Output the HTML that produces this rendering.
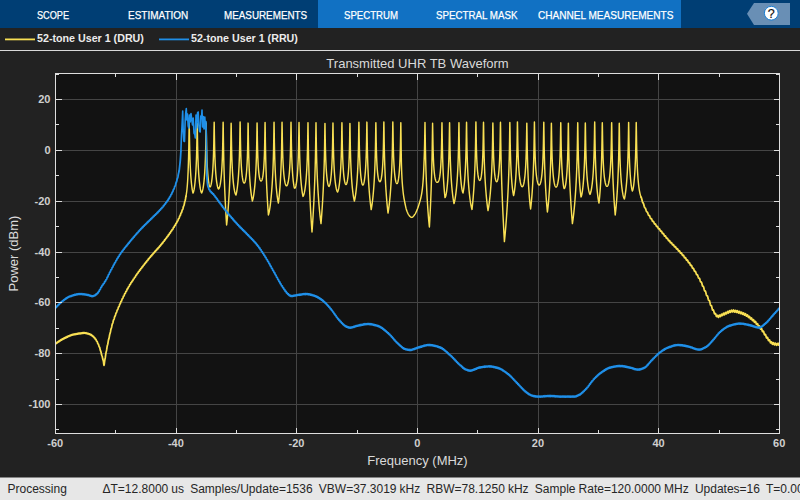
<!DOCTYPE html>
<html lang="en">
<head>
<meta charset="utf-8">
<title>Spectrum Analyzer</title>
<style>
html,body{margin:0;padding:0;}
body{width:800px;height:500px;overflow:hidden;background:#222222;position:relative;
font-family:"Liberation Sans",Arial,sans-serif;}
#root{position:absolute;left:0;top:0;width:800px;height:500px;}
.toolbar{position:absolute;left:0;top:0;width:800px;height:28px;background:#003e74;}
.active{position:absolute;left:318px;top:0;width:363px;height:28px;background:#1171c3;}
.tab{position:absolute;top:1px;height:28px;line-height:29px;color:#fff;font-size:11.2px;white-space:nowrap;-webkit-text-stroke:0.25px #fff;
transform-origin:0 50%;}
.help{position:absolute;left:747px;top:3px;width:43px;height:22px;}
.legend{position:absolute;left:0;top:28px;width:800px;height:22px;}
.legend .tx{position:absolute;top:-1px;line-height:22px;height:22px;font-size:10.7px;font-weight:bold;color:#ececec;white-space:nowrap;}
.sep{position:absolute;left:0;top:50px;width:800px;height:1px;background:#d9d9d9;}
.plot{position:absolute;left:0;top:0;}
.plot text{font-family:"Liberation Sans",Arial,sans-serif;}
.plot .tick text{font-size:11px;font-weight:bold;fill:#cfcfcf;}
.plot .lab{font-size:13px;fill:#dadada;}
.status{position:absolute;left:0;top:477px;width:800px;height:22px;border-top:1px solid #858585;background:#e7e7e7;color:#262626;
font-size:12px;line-height:23px;white-space:nowrap;overflow:hidden;word-spacing:-0.24px;}
.status span{position:absolute;top:0;}
</style>
</head>
<body>
<div id="root">
<svg class="plot" width="800" height="500" viewBox="0 0 800 500">
<rect x="55.5" y="73.5" width="724.0" height="360.0" fill="#121212"/>
<path d="M55.5 99.5H779.5M55.5 150.5H779.5M55.5 201.5H779.5M55.5 252.5H779.5M55.5 302.5H779.5M55.5 353.5H779.5M55.5 404.5H779.5M176.5 73.5V433.5M296.5 73.5V433.5M417.5 73.5V433.5M538.5 73.5V433.5M658.5 73.5V433.5" stroke="#454545" stroke-width="1" fill="none" shape-rendering="crispEdges"/>
<clipPath id="c"><rect x="56.0" y="74.0" width="723.0" height="359.0"/></clipPath>
<g clip-path="url(#c)" fill="none" stroke-linejoin="round" stroke-linecap="round">
<path d="M55.50 344.04L55.75 343.38L56.00 343.05L56.25 343.25L56.50 343.44L56.75 343.12L57.00 342.47L57.25 342.14L57.50 342.35L57.75 342.55L58.00 342.23L58.25 341.59L58.50 341.27L58.75 341.48L59.00 341.70L59.25 341.39L59.50 340.75L59.75 340.44L60.00 340.66L60.25 340.89L60.50 340.58L60.75 339.96L61.00 339.66L61.25 339.89L61.50 340.12L61.75 339.83L62.00 339.22L62.25 338.93L62.50 339.18L62.75 339.42L63.00 339.14L63.25 338.54L63.50 338.27L63.75 338.52L64.00 338.78L64.25 338.51L64.50 337.92L64.75 337.65L65.00 337.91L65.25 338.17L65.50 337.90L65.75 337.31L66.00 337.04L66.25 337.30L66.50 337.56L66.75 337.29L67.00 336.70L67.25 336.44L67.50 336.70L67.75 336.96L68.00 336.70L68.25 336.11L68.50 335.86L68.75 336.12L69.00 336.39L69.25 336.14L69.50 335.57L69.75 335.32L70.00 335.60L70.25 335.88L70.50 335.64L70.75 335.07L71.00 334.84L71.25 335.13L71.50 335.43L71.75 335.20L72.00 334.65L72.25 334.43L72.50 334.74L72.75 335.05L73.00 334.85L73.25 334.32L73.50 334.12L73.75 334.45L74.00 334.78L74.25 334.59L74.50 334.08L74.75 333.89L75.00 334.23L75.25 334.56L75.50 334.38L75.75 333.86L76.00 333.68L76.25 334.01L76.50 334.35L76.75 334.17L77.00 333.65L77.25 333.47L77.50 333.81L77.75 334.15L78.00 333.96L78.25 333.45L78.50 333.27L78.75 333.61L79.00 333.95L79.25 333.77L79.50 333.26L79.75 333.07L80.00 333.42L80.25 333.76L80.50 333.58L80.75 333.07L81.00 332.89L81.25 333.24L81.50 333.58L81.75 333.40L82.00 332.90L82.25 332.72L82.50 333.07L82.75 333.41L83.00 333.24L83.25 332.74L83.50 332.57L83.75 332.94L84.00 333.32L84.25 333.18L84.50 332.72L84.75 332.59L85.00 333.00L85.25 333.41L85.50 333.30L85.75 332.87L86.00 332.77L86.25 333.21L86.50 333.65L86.75 333.56L87.00 333.16L87.25 333.08L87.50 333.54L87.75 333.99L88.00 333.93L88.25 333.54L88.50 333.48L88.75 333.95L89.00 334.42L89.25 334.36L89.50 333.98L89.75 333.93L90.00 334.40L90.25 334.88L90.50 334.84L90.75 334.50L91.00 334.49L91.25 335.01L91.50 335.55L91.75 335.57L92.00 335.28L92.25 335.32L92.50 335.90L92.75 336.49L93.00 336.57L93.25 336.32L93.50 336.42L93.75 337.04L94.00 337.68L94.25 337.80L94.50 337.60L94.75 337.73L95.00 338.40L95.25 339.09L95.50 339.27L95.75 339.16L96.00 339.40L96.25 340.19L96.50 341.00L96.75 341.31L97.00 341.32L97.25 341.67L97.50 342.56L97.75 343.48L98.00 343.88L98.25 343.98L98.50 344.41L98.75 345.39L99.00 346.38L99.25 346.88L99.50 347.11L99.75 347.71L100.00 348.89L100.25 350.09L100.50 350.81L100.75 351.22L101.00 351.97L101.25 353.26L101.50 354.56L101.75 355.33L102.00 355.76L102.25 356.51L102.50 357.78L102.75 359.08L103.00 359.92L103.25 360.53L103.50 361.90L103.75 364.12L104.00 365.38L104.25 364.39L104.50 362.15L104.75 360.32L105.00 359.17L105.25 357.97L105.50 356.24L105.75 354.22L106.00 352.62L106.25 351.62L106.50 350.64L106.75 349.16L107.00 347.38L107.25 345.96L107.50 345.08L107.75 344.22L108.00 342.87L108.25 341.21L108.50 339.89L108.75 339.13L109.00 338.38L109.25 337.12L109.50 335.54L109.75 334.30L110.00 333.58L110.25 332.89L110.50 331.67L110.75 330.15L111.00 328.98L111.25 328.35L111.50 327.74L111.75 326.63L112.00 325.22L112.25 324.16L112.50 323.66L112.75 323.19L113.00 322.24L113.25 320.98L113.50 320.06L113.75 319.68L114.00 319.32L114.25 318.45L114.50 317.26L114.75 316.41L115.00 316.10L115.25 315.81L115.50 314.99L115.75 313.86L116.00 313.07L116.25 312.81L116.50 312.57L116.75 311.80L117.00 310.72L117.25 309.96L117.50 309.75L117.75 309.53L118.00 308.80L118.25 307.75L118.50 307.02L118.75 306.83L119.00 306.64L119.25 305.93L119.50 304.89L119.75 304.18L120.00 304.00L120.25 303.82L120.50 303.12L120.75 302.10L121.00 301.40L121.25 301.24L121.50 301.08L121.75 300.40L122.00 299.39L122.25 298.72L122.50 298.58L122.75 298.44L123.00 297.77L123.25 296.79L123.50 296.14L123.75 296.01L124.00 295.89L124.25 295.25L124.50 294.28L124.75 293.65L125.00 293.54L125.25 293.44L125.50 292.82L125.75 291.87L126.00 291.25L126.25 291.17L126.50 291.08L126.75 290.48L127.00 289.55L127.25 288.95L127.50 288.89L127.75 288.82L128.00 288.24L128.25 287.33L128.50 286.75L128.75 286.71L129.00 286.66L129.25 286.10L129.50 285.22L129.75 284.67L130.00 284.64L130.25 284.62L130.50 284.08L130.75 283.22L131.00 282.68L131.25 282.67L131.50 282.66L131.75 282.13L132.00 281.28L132.25 280.76L132.50 280.76L132.75 280.76L133.00 280.24L133.25 279.39L133.50 278.87L133.75 278.87L134.00 278.88L134.25 278.36L134.50 277.52L134.75 277.01L135.00 277.02L135.25 277.03L135.50 276.52L135.75 275.69L136.00 275.18L136.25 275.20L136.50 275.22L136.75 274.72L137.00 273.89L137.25 273.39L137.50 273.42L137.75 273.45L138.00 272.95L138.25 272.14L138.50 271.65L138.75 271.68L139.00 271.72L139.25 271.24L139.50 270.43L139.75 269.95L140.00 270.00L140.25 270.05L140.50 269.57L140.75 268.77L141.00 268.30L141.25 268.35L141.50 268.40L141.75 267.93L142.00 267.14L142.25 266.67L142.50 266.72L142.75 266.78L143.00 266.31L143.25 265.52L143.50 265.05L143.75 265.11L144.00 265.17L144.25 264.71L144.50 263.92L144.75 263.46L145.00 263.52L145.25 263.58L145.50 263.12L145.75 262.34L146.00 261.88L146.25 261.95L146.50 262.02L146.75 261.56L147.00 260.78L147.25 260.32L147.50 260.40L147.75 260.47L148.00 260.02L148.25 259.24L148.50 258.79L148.75 258.87L149.00 258.95L149.25 258.50L149.50 257.73L149.75 257.28L150.00 257.36L150.25 257.44L150.50 257.00L150.75 256.23L151.00 255.79L151.25 255.88L151.50 255.97L151.75 255.53L152.00 254.76L152.25 254.33L152.50 254.42L152.75 254.51L153.00 254.08L153.25 253.33L153.50 252.90L153.75 253.00L154.00 253.11L154.25 252.68L154.50 251.93L154.75 251.51L155.00 251.62L155.25 251.72L155.50 251.30L155.75 250.56L156.00 250.14L156.25 250.24L156.50 250.35L156.75 249.92L157.00 249.18L157.25 248.76L157.50 248.86L157.75 248.96L158.00 248.53L158.25 247.78L158.50 247.35L158.75 247.45L159.00 247.55L159.25 247.11L159.50 246.35L159.75 245.91L160.00 246.00L160.25 246.08L160.50 245.64L160.75 244.87L161.00 244.42L161.25 244.50L161.50 244.57L161.75 244.12L162.00 243.34L162.25 242.89L162.50 242.96L162.75 243.02L163.00 242.56L163.25 241.78L163.50 241.32L163.75 241.38L164.00 241.44L164.25 240.97L164.50 240.18L164.75 239.71L165.00 239.76L165.25 239.82L165.50 239.34L165.75 238.54L166.00 238.07L166.25 238.12L166.50 238.17L166.75 237.69L167.00 236.88L167.25 236.40L167.50 236.44L167.75 236.48L168.00 236.00L168.25 235.19L168.50 234.70L168.75 234.74L169.00 234.77L169.25 234.28L169.50 233.46L169.75 232.97L170.00 233.00L170.25 233.03L170.50 232.53L170.75 231.70L171.00 231.20L171.25 231.22L171.50 231.23L171.75 230.72L172.00 229.88L172.25 229.36L172.50 229.37L172.75 229.37L173.00 228.84L173.25 227.99L173.50 227.46L173.75 227.45L174.00 227.43L174.25 226.89L174.50 226.02L174.75 225.47L175.00 225.44L175.25 225.40L175.50 224.84L175.75 223.95L176.00 223.38L176.25 223.33L176.50 223.27L176.75 222.68L177.00 221.76L177.25 221.16L177.50 221.07L177.75 220.97L178.00 220.33L178.25 219.36L178.50 218.70L178.75 218.55L179.00 218.40L179.25 217.71L179.50 216.69L179.75 215.98L180.00 215.80L180.25 215.60L180.50 214.88L180.75 213.82L181.00 213.08L181.25 212.85L181.50 212.62L181.75 211.86L182.00 210.76L182.25 209.98L182.50 209.69L182.75 209.37L183.00 208.50L183.25 207.27L183.50 206.33L183.75 205.88L184.00 205.39L184.25 204.33L184.50 202.88L184.75 201.71L185.00 201.00L185.25 200.25L185.50 198.94L185.75 197.24L186.00 196.15M641.00 197.06L641.25 197.44L641.50 198.02L641.75 198.89L642.00 200.00L642.25 201.11L642.50 202.00L642.75 202.57L643.00 202.91L643.25 203.23L643.50 203.74L643.75 204.53L644.00 205.52L644.25 206.50L644.50 207.25L644.75 207.68L645.00 207.89L645.25 208.08L645.50 208.46L645.75 209.13L646.00 210.00L646.25 210.86L646.50 211.49L646.75 211.81L647.00 211.91L647.25 212.00L647.50 212.30L647.75 212.90L648.00 213.71L648.25 214.51L648.50 215.09L648.75 215.36L649.00 215.41L649.25 215.44L649.50 215.69L649.75 216.25L650.00 217.02L650.25 217.79L650.50 218.33L650.75 218.55L651.00 218.55L651.25 218.54L651.50 218.75L651.75 219.27L652.00 220.00L652.25 220.73L652.50 221.24L652.75 221.42L653.00 221.38L653.25 221.33L653.50 221.50L653.75 221.99L654.00 222.70L654.25 223.41L654.50 223.89L654.75 224.05L655.00 223.98L655.25 223.90L655.50 224.06L655.75 224.53L656.00 225.22L656.25 225.92L656.50 226.39L656.75 226.53L657.00 226.44L657.25 226.35L657.50 226.48L657.75 226.94L658.00 227.64L658.25 228.33L658.50 228.79L658.75 228.92L659.00 228.82L659.25 228.72L659.50 228.85L659.75 229.31L660.00 230.00L660.25 230.69L660.50 231.16L660.75 231.29L661.00 231.19L661.25 231.08L661.50 231.22L661.75 231.69L662.00 232.39L662.25 233.10L662.50 233.57L662.75 233.70L663.00 233.60L663.25 233.50L663.50 233.63L663.75 234.10L664.00 234.81L664.25 235.52L664.50 235.99L664.75 236.13L665.00 236.02L665.25 235.90L665.50 236.03L665.75 236.50L666.00 237.20L666.25 237.91L666.50 238.38L666.75 238.49L667.00 238.37L667.25 238.24L667.50 238.35L667.75 238.80L668.00 239.50L668.25 240.20L668.50 240.65L668.75 240.75L669.00 240.60L669.25 240.45L669.50 240.54L669.75 240.98L670.00 241.67L670.25 242.35L670.50 242.79L670.75 242.88L671.00 242.71L671.25 242.55L671.50 242.63L671.75 243.06L672.00 243.74L672.25 244.43L672.50 244.86L672.75 244.94L673.00 244.76L673.25 244.59L673.50 244.66L673.75 245.09L674.00 245.78L674.25 246.46L674.50 246.89L674.75 246.97L675.00 246.79L675.25 246.60L675.50 246.68L675.75 247.11L676.00 247.80L676.25 248.49L676.50 248.93L676.75 249.01L677.00 248.82L677.25 248.64L677.50 248.72L677.75 249.16L678.00 249.86L678.25 250.57L678.50 251.01L678.75 251.10L679.00 250.92L679.25 250.74L679.50 250.83L679.75 251.28L680.00 252.00L680.25 252.72L680.50 253.18L680.75 253.27L681.00 253.10L681.25 252.93L681.50 253.02L681.75 253.48L682.00 254.22L682.25 254.95L682.50 255.42L682.75 255.52L683.00 255.35L683.25 255.18L683.50 255.28L683.75 255.75L684.00 256.50L684.25 257.25L684.50 257.73L684.75 257.84L685.00 257.68L685.25 257.51L685.50 257.62L685.75 258.11L686.00 258.88L686.25 259.64L686.50 260.14L686.75 260.26L687.00 260.11L687.25 259.96L687.50 260.08L687.75 260.59L688.00 261.37L688.25 262.16L688.50 262.67L688.75 262.81L689.00 262.67L689.25 262.53L689.50 262.66L689.75 263.19L690.00 264.00L690.25 264.81L690.50 265.35L690.75 265.50L691.00 265.38L691.25 265.25L691.50 265.41L691.75 265.96L692.00 266.80L692.25 267.64L692.50 268.20L692.75 268.38L693.00 268.27L693.25 268.17L693.50 268.35L693.75 268.92L694.00 269.79L694.25 270.66L694.50 271.25L694.75 271.44L695.00 271.36L695.25 271.28L695.50 271.48L695.75 272.08L696.00 272.98L696.25 273.88L696.50 274.50L696.75 274.72L697.00 274.65L697.25 274.59L697.50 274.82L697.75 275.45L698.00 276.38L698.25 277.31L698.50 277.96L698.75 278.20L699.00 278.16L699.25 278.12L699.50 278.38L699.75 279.04L700.00 280.00L700.25 280.97L700.50 281.66L700.75 281.95L701.00 281.95L701.25 281.96L701.50 282.26L701.75 283.00L702.00 284.05L702.25 285.12L702.50 285.89L702.75 286.23L703.00 286.27L703.25 286.31L703.50 286.66L703.75 287.46L704.00 288.58L704.25 289.70L704.50 290.52L704.75 290.89L705.00 290.93L705.25 290.97L705.50 291.33L705.75 292.16L706.00 293.31L706.25 294.47L706.50 295.30L706.75 295.66L707.00 295.68L707.25 295.69L707.50 296.03L707.75 296.84L708.00 298.00L708.25 299.17L708.50 300.01L708.75 300.37L709.00 300.39L709.25 300.41L709.50 300.79L709.75 301.67L710.00 302.90L710.25 304.15L710.50 305.04L710.75 305.42L711.00 305.43L711.25 305.43L711.50 305.79L711.75 306.65L712.00 307.86L712.25 309.07L712.50 309.90L712.75 310.19L713.00 310.09L713.25 309.96L713.50 310.18L713.75 310.91L714.00 312.00L714.25 313.08L714.50 313.79L714.75 313.95L715.00 313.71L715.25 313.45L715.50 313.55L715.75 314.16L716.00 315.13L716.25 316.07L716.50 316.55L716.75 316.45L717.00 315.95L717.25 315.43L717.50 315.29L717.75 315.67L718.00 316.40L718.25 317.09L718.50 317.34L718.75 316.99L719.00 316.23L719.25 315.45L719.50 315.06L719.75 315.23L720.00 315.80L720.25 316.38L720.50 316.56L720.75 316.17L721.00 315.39L721.25 314.60L721.50 314.20L721.75 314.36L722.00 314.91L722.25 315.46L722.50 315.61L722.75 315.21L723.00 314.42L723.25 313.64L723.50 313.25L723.75 313.42L724.00 314.00L724.25 314.58L724.50 314.76L724.75 314.38L725.00 313.60L725.25 312.82L725.50 312.44L725.75 312.61L726.00 313.17L726.25 313.73L726.50 313.89L726.75 313.50L727.00 312.72L727.25 311.93L727.50 311.54L727.75 311.71L728.00 312.27L728.25 312.84L728.50 313.01L728.75 312.63L729.00 311.86L729.25 311.09L729.50 310.72L729.75 310.91L730.00 311.50L730.25 312.09L730.50 312.29L730.75 311.94L731.00 311.21L731.25 310.48L731.50 310.15L731.75 310.38L732.00 311.01L732.25 311.66L732.50 311.91L732.75 311.62L733.00 310.94L733.25 310.27L733.50 310.00L733.75 310.30L734.00 311.00L734.25 311.71L734.50 312.03L734.75 311.79L735.00 311.16L735.25 310.54L735.50 310.31L735.75 310.64L736.00 311.37L736.25 312.10L736.50 312.43L736.75 312.22L737.00 311.61L737.25 311.00L737.50 310.79L737.75 311.14L738.00 311.89L738.25 312.63L738.50 312.99L738.75 312.78L739.00 312.19L739.25 311.60L739.50 311.40L739.75 311.77L740.00 312.52L740.25 313.28L740.50 313.64L740.75 313.45L741.00 312.87L741.25 312.29L741.50 312.10L741.75 312.47L742.00 313.24L742.25 314.00L742.50 314.38L742.75 314.19L743.00 313.62L743.25 313.04L743.50 312.86L743.75 313.23L744.00 314.00L744.25 314.77L744.50 315.15L744.75 314.99L745.00 314.43L745.25 313.88L745.50 313.73L745.75 314.14L746.00 314.95L746.25 315.76L746.50 316.18L746.75 316.06L747.00 315.54L747.25 315.02L747.50 314.91L747.75 315.35L748.00 316.19L748.25 317.04L748.50 317.49L748.75 317.40L749.00 316.91L749.25 316.42L749.50 316.33L749.75 316.80L750.00 317.67L750.25 318.54L750.50 319.01L750.75 318.94L751.00 318.47L751.25 318.00L751.50 317.93L751.75 318.41L752.00 319.29L752.25 320.18L752.50 320.67L752.75 320.60L753.00 320.14L753.25 319.68L753.50 319.62L753.75 320.11L754.00 321.00L754.25 321.89L754.50 322.39L754.75 322.34L755.00 321.90L755.25 321.47L755.50 321.44L755.75 321.96L756.00 322.89L756.25 323.82L756.50 324.36L756.75 324.35L757.00 323.95L757.25 323.55L757.50 323.55L757.75 324.11L758.00 325.07L758.25 326.03L758.50 326.60L758.75 326.62L759.00 326.24L759.25 325.87L759.50 325.90L759.75 326.48L760.00 327.46L760.25 328.45L760.50 329.04L760.75 329.07L761.00 328.72L761.25 328.37L761.50 328.41L761.75 329.01L762.00 330.00L762.25 331.00L762.50 331.63L762.75 331.71L763.00 331.41L763.25 331.12L763.50 331.23L763.75 331.90L764.00 332.98L764.25 334.06L764.50 334.75L764.75 334.88L765.00 334.62L765.25 334.36L765.50 334.49L765.75 335.17L766.00 336.24L766.25 337.30L766.50 337.96L766.75 338.05L767.00 337.73L767.25 337.40L767.50 337.45L767.75 338.04L768.00 339.00L768.25 339.96L768.50 340.52L768.75 340.54L769.00 340.16L769.25 339.77L769.50 339.79L769.75 340.35L770.00 341.30L770.25 342.24L770.50 342.78L770.75 342.76L771.00 342.32L771.25 341.88L771.50 341.81L771.75 342.28L772.00 343.13L772.25 343.95L772.50 344.36L772.75 344.19L773.00 343.60L773.25 343.00L773.50 342.78L773.75 343.13L774.00 343.86L774.25 344.59L774.50 344.93L774.75 344.71L775.00 344.09L775.25 343.47L775.50 343.23L775.75 343.56L776.00 344.27L776.25 344.98L776.50 345.29L776.75 345.04L777.00 344.40L777.25 343.74L777.50 343.44L777.75 343.67L778.00 344.28L778.25 344.87L778.50 345.04L778.75 344.65L779.00 343.86L779.25 343.06L779.50 342.65" stroke="#f9e054" stroke-width="1.75"/>
<path d="M186.00 196.15L186.20 195.00L186.40 193.73L186.60 192.33L186.80 190.76L187.00 189.00L187.20 186.92L187.40 184.42L187.60 181.45L187.80 177.97L188.00 173.90L188.20 169.10L188.40 163.33L188.60 156.21L188.80 146.95L189.00 134.21L189.20 122.49L189.40 133.18L189.60 144.98L189.80 153.36L190.00 159.69L190.20 164.73L190.40 168.92L190.60 172.49L190.80 175.59L191.00 178.31L191.20 180.72L191.40 182.86L191.60 184.77L191.80 186.47L192.00 187.97L192.20 189.30L192.40 190.46L192.60 191.46L192.80 192.31L193.00 193.00L193.20 192.68L193.40 192.21L193.60 191.59L193.80 190.81L194.00 189.89L194.20 188.81L194.40 187.56L194.60 186.14L194.80 184.53L195.00 182.71L195.20 180.66L195.40 178.35L195.60 175.73L195.80 172.72L196.00 169.25L196.20 165.14L196.40 160.18L196.60 153.93L196.80 145.61L197.00 133.87L197.20 123.22L197.40 133.79L197.60 145.45L197.80 153.68L198.00 159.84L198.20 164.71L198.40 168.73L198.60 172.12L198.80 175.04L199.00 177.59L199.20 179.84L199.40 181.83L199.60 183.61L199.80 185.19L200.00 186.60L200.20 187.85L200.40 188.96L200.60 189.93L200.80 190.78L201.00 191.51L201.20 192.12L201.40 192.61L201.60 193.00L201.80 192.69L202.00 192.27L202.20 191.74L202.40 191.10L202.60 190.34L202.80 189.46L203.00 188.46L203.20 187.32L203.40 186.05L203.60 184.61L203.80 183.01L204.00 181.21L204.20 179.19L204.40 176.91L204.60 174.33L204.80 171.35L205.00 167.90L205.20 163.79L205.40 158.77L205.60 152.38L205.80 143.75L206.00 131.52L206.17 123.04L206.20 123.43L206.40 135.50L206.60 146.45L206.80 154.16L207.00 159.95L207.20 164.52L207.40 168.26L207.60 171.40L207.80 174.08L208.00 176.38L208.20 178.37L208.40 180.09L208.60 181.58L208.80 182.87L209.00 183.96L209.20 184.88L209.40 185.64L209.60 186.24L209.80 186.69L210.00 187.00L210.20 186.87L210.40 186.60L210.60 186.19L210.80 185.63L211.00 184.92L211.20 184.06L211.40 183.03L211.60 181.84L211.80 180.45L212.00 178.85L212.20 177.02L212.40 174.92L212.60 172.49L212.80 169.68L213.00 166.36L213.20 162.39L213.40 157.50L213.60 151.24L213.80 142.72L214.00 130.60L214.17 122.20L214.20 122.59L214.40 134.67L214.60 145.62L214.80 153.35L215.00 159.15L215.20 163.75L215.40 167.53L215.60 170.72L215.80 173.45L216.00 175.82L216.20 177.90L216.40 179.72L216.60 181.33L216.80 182.76L217.00 184.01L217.20 185.11L217.40 186.07L217.60 186.89L217.80 187.60L218.00 188.18L218.20 188.64L218.40 189.00L218.60 188.95L218.80 188.79L219.00 188.52L219.20 188.13L219.40 187.64L219.60 187.03L219.80 186.29L220.00 185.43L220.20 184.43L220.40 183.29L220.60 181.99L220.80 180.51L221.00 178.83L221.20 176.92L221.40 174.74L221.60 172.24L221.80 169.34L222.00 165.93L222.20 161.84L222.40 156.78L222.60 150.24L222.80 141.28L223.00 128.64L223.14 122.31L223.20 124.24L223.40 138.94L223.60 151.28L223.80 160.70L224.00 168.41L224.20 175.02L224.40 180.90L224.60 186.23L224.80 191.15L225.00 195.73L225.20 200.05L225.40 204.13L225.60 208.01L225.80 211.71L226.00 215.25L226.20 218.64L226.40 221.89L226.60 225.00L226.80 223.35L227.00 221.57L227.20 219.65L227.40 217.61L227.60 215.43L227.80 213.12L228.00 210.67L228.20 208.07L228.40 205.32L228.60 202.41L228.80 199.31L229.00 196.01L229.20 192.49L229.40 188.70L229.60 184.59L229.80 180.09L230.00 175.09L230.20 169.43L230.40 162.83L230.60 154.79L230.80 144.36L231.00 130.35L231.14 123.18L231.20 124.71L231.40 137.78L231.60 148.34L231.80 155.90L232.00 161.68L232.20 166.32L232.40 170.19L232.60 173.49L232.80 176.35L233.00 178.86L233.20 181.08L233.40 183.06L233.60 184.83L233.80 186.41L234.00 187.83L234.20 189.09L234.40 190.22L234.60 191.21L234.80 192.09L235.00 192.85L235.20 193.49L235.40 194.03L235.60 194.46L235.80 194.78L236.00 195.00L236.20 194.21L236.40 193.30L236.60 192.29L236.80 191.15L237.00 189.90L237.20 188.51L237.40 186.97L237.60 185.28L237.80 183.42L238.00 181.35L238.20 179.06L238.40 176.50L238.60 173.61L238.80 170.31L239.00 166.49L239.20 161.96L239.40 156.42L239.60 149.30L239.80 139.56L240.00 126.30L240.11 121.86L240.20 124.89L240.40 137.87L240.60 147.55L240.80 154.42L241.00 159.62L241.20 163.74L241.40 167.10L241.60 169.90L241.80 172.26L242.00 174.28L242.20 176.00L242.40 177.47L242.60 178.73L242.80 179.80L243.00 180.70L243.20 181.44L243.40 182.03L243.60 182.48L243.80 182.81L244.00 183.00L244.20 183.07L244.40 183.00L244.60 182.80L244.80 182.47L245.00 182.00L245.20 181.37L245.40 180.58L245.60 179.62L245.80 178.46L246.00 177.08L246.20 175.44L246.40 173.52L246.60 171.24L246.80 168.53L247.00 165.26L247.20 161.26L247.40 156.21L247.60 149.56L247.80 140.25L248.00 127.37L248.11 123.10L248.20 126.34L248.40 139.88L248.60 150.15L248.80 157.66L249.00 163.53L249.20 168.34L249.40 172.41L249.60 175.95L249.80 179.07L250.00 181.85L250.20 184.36L250.40 186.64L250.60 188.71L250.80 190.61L251.00 192.35L251.20 193.95L251.40 195.41L251.60 196.76L251.80 197.98L252.00 199.09L252.20 200.10L252.40 201.00L252.60 200.37L252.80 199.63L253.00 198.79L253.20 197.85L253.40 196.79L253.60 195.63L253.80 194.35L254.00 192.94L254.20 191.40L254.40 189.71L254.60 187.87L254.80 185.85L255.00 183.62L255.20 181.16L255.40 178.42L255.60 175.34L255.80 171.84L256.00 167.79L256.20 163.00L256.40 157.12L256.60 149.56L256.80 139.16L257.00 125.69L257.08 123.07L257.20 127.98L257.40 140.73L257.60 149.81L257.80 156.27L258.00 161.15L258.20 164.97L258.40 168.06L258.60 170.58L258.80 172.67L259.00 174.40L259.20 175.85L259.40 177.05L259.60 178.05L259.80 178.86L260.00 179.52L260.20 180.05L260.40 180.45L260.60 180.73L260.80 180.92L261.00 181.00L261.20 180.98L261.40 180.87L261.60 180.64L261.80 180.31L262.00 179.86L262.20 179.28L262.40 178.56L262.60 177.67L262.80 176.60L263.00 175.32L263.20 173.78L263.40 171.95L263.60 169.75L263.80 167.09L264.00 163.85L264.20 159.82L264.40 154.66L264.60 147.76L264.80 137.97L265.00 125.02L265.08 122.57L265.20 128.28L265.40 142.63L265.60 153.47L265.80 161.80L266.00 168.62L266.20 174.48L266.40 179.66L266.60 184.34L266.80 188.64L267.00 192.62L267.20 196.35L267.40 199.86L267.60 203.19L267.80 206.35L268.00 209.37L268.20 212.24L268.40 215.00L268.60 214.39L268.80 213.67L269.00 212.84L269.20 211.90L269.40 210.85L269.60 209.70L269.80 208.45L270.00 207.09L270.20 205.63L270.40 204.07L270.60 202.39L270.80 200.60L271.00 198.68L271.20 196.63L271.40 194.44L271.60 192.09L271.80 189.56L272.00 186.83L272.20 183.87L272.40 180.62L272.60 177.03L272.80 173.01L273.00 168.43L273.20 163.07L273.40 156.57L273.60 148.27L273.80 136.93L274.00 123.51L274.05 122.31L274.20 129.74L274.40 142.84L274.60 152.32L274.80 159.44L275.00 165.14L275.20 169.89L275.40 173.98L275.60 177.57L275.80 180.76L276.00 183.63L276.20 186.22L276.40 188.58L276.60 190.74L276.80 192.71L277.00 194.51L277.20 196.15L277.40 197.64L277.60 198.99L277.80 200.20L278.00 201.27L278.20 202.20L278.40 203.00L278.60 201.51L278.80 199.89L279.00 198.12L279.20 196.20L279.40 194.11L279.60 191.85L279.80 189.39L280.00 186.72L280.20 183.80L280.40 180.59L280.60 177.02L280.80 173.02L281.00 168.44L281.20 163.08L281.40 156.57L281.60 148.26L281.80 136.90L282.00 123.48L282.05 122.28L282.20 129.23L282.40 141.60L282.60 150.29L282.80 156.61L283.00 161.49L283.20 165.41L283.40 168.66L283.60 171.40L283.80 173.74L284.00 175.76L284.20 177.52L284.40 179.04L284.60 180.37L284.80 181.52L285.00 182.50L285.20 183.35L285.40 184.06L285.60 184.64L285.80 185.10L286.00 185.45L286.20 185.68L286.40 185.81L286.60 185.83L286.80 185.74L287.00 185.54L287.20 185.23L287.40 184.80L287.60 184.26L287.80 183.60L288.00 182.80L288.20 181.86L288.40 180.77L288.60 179.51L288.80 178.05L289.00 176.38L289.20 174.46L289.40 172.23L289.60 169.64L289.80 166.58L290.00 162.92L290.20 158.42L290.40 152.68L290.60 144.96L290.80 133.94L291.00 122.41L291.02 122.24L291.20 131.44L291.40 143.51L291.60 152.01L291.80 158.33L292.00 163.30L292.20 167.37L292.40 170.80L292.60 173.73L292.80 176.28L293.00 178.50L293.20 180.45L293.40 182.17L293.60 183.69L293.80 185.01L294.00 186.17L294.20 187.16L294.40 188.00L294.60 188.15L294.80 188.16L295.00 188.04L295.20 187.77L295.40 187.36L295.60 186.81L295.80 186.11L296.00 185.26L296.20 184.25L296.40 183.07L296.60 181.71L296.80 180.14L297.00 178.33L297.20 176.27L297.40 173.89L297.60 171.14L297.80 167.91L298.00 164.08L298.20 159.40L298.40 153.48L298.60 145.59L298.80 134.39L299.00 122.71L299.02 122.53L299.20 131.90L299.40 144.17L299.60 152.90L299.80 159.45L300.00 164.66L300.20 168.98L300.40 172.67L300.60 175.88L300.80 178.70L301.00 181.23L301.20 183.50L301.40 185.54L301.60 187.40L301.80 189.09L302.00 190.63L302.20 192.03L302.40 193.30L302.60 194.45L302.80 195.48L303.00 196.40L303.20 196.15L303.40 195.80L303.60 195.34L303.80 194.78L304.00 194.11L304.20 193.33L304.40 192.44L304.60 191.43L304.80 190.31L305.00 189.05L305.20 187.65L305.40 186.10L305.60 184.38L305.80 182.46L306.00 180.33L306.20 177.95L306.40 175.26L306.60 172.19L306.80 168.65L307.00 164.48L307.20 159.43L307.40 153.07L307.60 144.58L307.80 132.61L307.99 122.62L308.00 122.73L308.20 135.52L308.40 148.77L308.60 158.75L308.80 166.76L309.00 173.56L309.20 179.54L309.40 184.94L309.60 189.89L309.80 194.50L310.00 198.81L310.20 202.88L310.40 206.74L310.60 210.42L310.80 213.93L311.00 217.28L311.20 220.49L311.40 223.56L311.60 226.50L311.80 229.32L312.00 232.00L312.20 229.30L312.40 226.47L312.60 223.51L312.80 220.42L313.00 217.19L313.20 213.81L313.40 210.28L313.60 206.58L313.80 202.69L314.00 198.58L314.20 194.23L314.40 189.58L314.60 184.58L314.80 179.12L315.00 173.05L315.20 166.14L315.40 157.96L315.60 147.72L315.80 134.07L315.99 122.70L316.00 122.78L316.20 134.88L316.40 147.34L316.60 156.50L316.80 163.66L317.00 169.60L317.20 174.71L317.40 179.23L317.60 183.31L317.80 187.03L318.00 190.46L318.20 193.66L318.40 196.65L318.60 199.46L318.80 202.12L319.00 204.63L319.20 207.02L319.40 209.28L319.60 211.43L319.80 213.47L320.00 215.41L320.20 217.25L320.40 218.99L320.60 220.62L320.80 222.16L321.00 223.60L321.20 221.21L321.40 218.72L321.60 216.12L321.80 213.41L322.00 210.57L322.20 207.60L322.40 204.49L322.60 201.22L322.80 197.76L323.00 194.10L323.20 190.19L323.40 185.97L323.60 181.39L323.80 176.34L324.00 170.64L324.20 164.05L324.40 156.09L324.60 145.88L324.80 132.11L324.96 123.37L325.00 124.05L325.20 136.43L325.40 147.13L325.60 154.67L325.80 160.32L326.00 164.78L326.20 168.43L326.40 171.47L326.60 174.06L326.80 176.27L327.00 178.18L327.20 179.83L327.40 181.24L327.60 182.46L327.80 183.49L328.00 184.35L328.20 185.05L328.40 185.60L328.60 186.01L328.80 186.27L329.00 186.40L329.20 186.19L329.40 185.84L329.60 185.35L329.80 184.72L330.00 183.93L330.20 182.98L330.40 181.85L330.60 180.53L330.80 179.01L331.00 177.24L331.20 175.20L331.40 172.83L331.60 170.06L331.80 166.78L332.00 162.83L332.20 157.94L332.40 151.64L332.60 143.02L332.80 130.75L332.96 123.06L333.00 123.76L333.20 136.26L333.40 147.09L333.60 154.77L333.80 160.58L334.00 165.20L334.20 169.02L334.40 172.25L334.60 175.03L334.80 177.45L335.00 179.58L335.20 181.47L335.40 183.13L335.60 184.62L335.80 185.93L336.00 187.10L336.20 188.12L336.40 189.02L336.60 189.79L336.80 190.45L337.00 191.00L337.20 191.44L337.40 191.77L337.60 192.00L337.80 191.57L338.00 191.03L338.20 190.38L338.40 189.62L338.60 188.74L338.80 187.74L339.00 186.60L339.20 185.32L339.40 183.88L339.60 182.27L339.80 180.45L340.00 178.41L340.20 176.09L340.40 173.46L340.60 170.42L340.80 166.86L341.00 162.61L341.20 157.37L341.40 150.63L341.60 141.39L341.80 128.51L341.93 122.80L342.00 124.73L342.20 137.64L342.40 147.70L342.60 154.81L342.80 160.18L343.00 164.43L343.20 167.90L343.40 170.80L343.60 173.26L343.80 175.36L344.00 177.16L344.20 178.71L344.40 180.03L344.60 181.15L344.80 182.09L345.00 182.87L345.20 183.49L345.40 183.95L345.60 184.28L345.80 184.46L346.00 184.50L346.20 184.40L346.40 184.17L346.60 183.79L346.80 183.26L347.00 182.57L347.20 181.72L347.40 180.69L347.60 179.46L347.80 178.02L348.00 176.33L348.20 174.36L348.40 172.04L348.60 169.31L348.80 166.05L349.00 162.07L349.20 157.11L349.40 150.62L349.60 141.62L349.80 128.95L349.93 123.36L350.00 125.44L350.20 138.87L350.40 149.49L350.60 157.19L350.80 163.16L351.00 168.03L351.20 172.14L351.40 175.69L351.60 178.81L351.80 181.58L352.00 184.07L352.20 186.33L352.40 188.38L352.60 190.24L352.80 191.94L353.00 193.50L353.20 194.92L353.40 196.22L353.60 197.39L353.80 198.46L354.00 199.41L354.20 200.26L354.40 201.00L354.60 200.19L354.80 199.28L355.00 198.26L355.20 197.14L355.40 195.90L355.60 194.55L355.80 193.08L356.00 191.48L356.20 189.73L356.40 187.83L356.60 185.76L356.80 183.49L357.00 180.98L357.20 178.21L357.40 175.11L357.60 171.60L357.80 167.56L358.00 162.81L358.20 157.01L358.40 149.62L358.60 139.53L358.80 126.04L358.90 122.18L359.00 125.84L359.20 138.87L359.40 148.45L359.60 155.32L359.80 160.56L360.00 164.75L360.20 168.20L360.40 171.11L360.60 173.58L360.80 175.71L361.00 177.55L361.20 179.13L361.40 180.50L361.60 181.66L361.80 182.65L362.00 183.47L362.20 184.13L362.40 184.64L362.60 185.00L362.80 185.07L363.00 184.99L363.20 184.78L363.40 184.42L363.60 183.91L363.80 183.26L364.00 182.44L364.20 181.46L364.40 180.30L364.60 178.94L364.80 177.37L365.00 175.54L365.20 173.42L365.40 170.95L365.60 168.06L365.80 164.61L366.00 160.43L366.20 155.20L366.40 148.34L366.60 138.77L366.80 125.75L366.90 122.10L367.00 126.11L367.20 139.96L367.40 150.44L367.60 158.24L367.80 164.45L368.00 169.63L368.20 174.10L368.40 178.05L368.60 181.59L368.80 184.81L369.00 187.76L369.20 190.49L369.40 193.02L369.60 195.39L369.80 197.59L370.00 199.66L370.20 201.60L370.40 203.42L370.60 205.13L370.80 206.72L371.00 208.21L371.20 209.60L371.40 208.56L371.60 207.41L371.80 206.16L372.00 204.81L372.20 203.35L372.40 201.77L372.60 200.09L372.80 198.27L373.00 196.33L373.20 194.24L373.40 191.99L373.60 189.56L373.80 186.94L374.00 184.07L374.20 180.93L374.40 177.46L374.60 173.55L374.80 169.10L375.00 163.89L375.20 157.59L375.40 149.57L375.60 138.65L375.80 124.95L375.87 122.79L376.00 128.37L376.20 141.00L376.40 149.94L376.60 156.33L376.80 161.19L377.00 165.02L377.20 168.12L377.40 170.69L377.60 172.82L377.80 174.61L378.00 176.12L378.20 177.38L378.40 178.44L378.60 179.32L378.80 180.04L379.00 180.62L379.20 181.06L379.40 181.39L379.60 181.60L379.80 181.70L380.00 181.68L380.20 181.54L380.40 181.28L380.60 180.90L380.80 180.38L381.00 179.72L381.20 178.90L381.40 177.91L381.60 176.73L381.80 175.33L382.00 173.68L382.20 171.72L382.40 169.39L382.60 166.62L382.80 163.25L383.00 159.10L383.20 153.81L383.40 146.76L383.60 136.74L383.80 123.85L383.87 121.92L384.00 128.12L384.20 141.89L384.40 152.07L384.60 159.79L384.80 166.03L385.00 171.32L385.20 175.93L385.40 180.05L385.60 183.77L385.80 187.19L386.00 190.34L386.20 193.28L386.40 196.03L386.60 198.61L386.80 201.04L387.00 203.33L387.20 205.49L387.40 207.54L387.60 209.47L387.80 211.29L388.00 213.00L388.20 211.90L388.40 210.70L388.60 209.39L388.80 207.98L389.00 206.46L389.20 204.83L389.40 203.08L389.60 201.22L389.80 199.23L390.00 197.10L390.20 194.83L390.40 192.40L390.60 189.79L390.80 186.97L391.00 183.92L391.20 180.58L391.40 176.89L391.60 172.77L391.80 168.08L392.00 162.61L392.20 155.97L392.40 147.49L392.60 135.90L392.80 122.72L392.84 121.91L393.00 129.55L393.20 141.73L393.40 150.27L393.60 156.48L393.80 161.27L394.00 165.13L394.20 168.31L394.40 170.98L394.60 173.25L394.80 175.20L395.00 176.87L395.20 178.31L395.40 179.54L395.60 180.59L395.80 181.46L396.00 182.18L396.20 182.74L396.40 183.17L396.60 183.45L396.80 183.60L397.00 183.61L397.20 183.48L397.40 183.21L397.60 182.79L397.80 182.22L398.00 181.49L398.20 180.58L398.40 179.48L398.60 178.17L398.80 176.63L399.00 174.83L399.20 172.71L399.40 170.21L399.60 167.25L399.80 163.68L400.00 159.30L400.20 153.72L400.40 146.26L400.60 135.63L400.80 123.31L400.84 122.64L401.00 134.06L401.20 150.65L401.40 162.46L401.60 170.00L401.80 174.83L402.00 178.67L402.20 181.83L402.40 184.51L402.60 186.86L402.80 189.00L403.00 190.95L403.20 192.71L403.40 194.31L403.60 195.76L403.80 197.09L404.00 198.32L404.20 199.45L404.40 200.50L404.60 201.49L404.80 202.49L405.00 203.49L405.20 204.49L405.40 205.47L405.60 206.42L405.80 207.32L406.00 208.16L406.20 208.93L406.40 209.60L406.60 210.20L406.80 210.77L407.00 211.31L407.20 211.81L407.40 212.29L407.60 212.73L407.80 213.15L408.00 213.55L408.20 213.92L408.40 214.27L408.60 214.59L408.80 214.90L409.00 215.19L409.20 215.46L409.40 215.72L409.60 215.96L409.80 216.19L410.00 216.40L410.20 216.59L410.40 216.77L410.60 216.93L410.80 217.07L411.00 217.19L411.20 217.30L411.40 217.37L411.60 217.41L411.80 217.40L412.00 217.36L412.20 217.29L412.40 217.19L412.60 217.05L412.80 216.89L413.00 216.71L413.20 216.51L413.40 216.28L413.60 216.05L413.80 215.79L414.00 215.53L414.20 215.25L414.40 214.97L414.60 214.69L414.80 214.40L415.00 214.10L415.20 213.78L415.40 213.43L415.60 213.07L415.80 212.69L416.00 212.29L416.20 211.87L416.40 211.44L416.60 211.00L416.80 210.54L417.00 210.08L417.20 209.60L417.40 209.10L417.60 208.58L417.80 208.02L418.00 207.45L418.20 206.85L418.40 206.24L418.60 205.62L418.80 204.99L419.00 204.34L419.20 203.70L419.40 203.05L419.60 202.40L419.80 201.74L420.00 201.07L420.20 200.37L420.40 199.63L420.60 198.86L420.80 198.04L421.00 197.16L421.20 196.22L421.40 195.20L421.60 194.10L421.80 192.91L422.00 191.60L422.20 190.14L422.40 188.48L422.60 186.62L422.80 184.53L423.00 182.20L423.20 179.60L423.40 176.38L423.60 172.41L423.80 167.92L424.00 163.08L424.20 158.00L424.40 152.06L424.60 144.08L424.80 132.74L425.00 122.57L425.20 134.40L425.40 147.51L425.60 157.26L425.80 165.00L426.00 171.49L426.20 177.15L426.40 182.20L426.60 186.80L426.80 191.03L427.00 194.96L427.20 198.63L427.40 202.07L427.60 205.31L427.80 208.37L428.00 211.25L428.20 213.97L428.40 216.52L428.60 218.92L428.80 221.17L429.00 223.27L429.20 225.21L429.40 227.00L429.60 223.44L429.80 219.71L430.00 215.82L430.20 211.76L430.40 207.50L430.60 203.02L430.80 198.29L431.00 193.27L431.20 187.90L431.40 182.08L431.60 175.66L431.80 168.42L432.00 159.96L432.20 149.49L432.40 135.69L432.60 123.25L432.80 133.60L433.00 144.95L433.20 152.82L433.40 158.56L433.60 162.97L433.80 166.48L434.00 169.33L434.20 171.68L434.40 173.63L434.60 175.27L434.80 176.64L435.00 177.79L435.20 178.76L435.40 179.56L435.60 180.23L435.80 180.78L436.00 181.23L436.20 181.59L436.40 181.88L436.60 182.10L436.80 182.25L437.00 182.35L437.20 182.40L437.40 182.39L437.60 182.33L437.80 182.22L438.00 182.04L438.20 181.80L438.40 181.48L438.60 181.08L438.80 180.59L439.00 180.00L439.20 179.28L439.40 178.43L439.60 177.41L439.80 176.19L440.00 174.76L440.20 173.05L440.40 171.01L440.60 168.57L440.80 165.61L441.00 161.97L441.20 157.38L441.40 151.37L441.60 143.08L441.80 131.12L441.97 122.81L442.00 123.29L442.20 136.06L442.40 147.78L442.60 156.30L442.80 162.92L443.00 168.34L443.20 172.95L443.40 176.96L443.60 180.52L443.80 183.70L444.00 186.59L444.20 189.21L444.40 191.60L444.60 193.78L444.80 195.78L445.00 197.60L445.20 197.39L445.40 197.02L445.60 196.50L445.80 195.81L446.00 194.97L446.20 193.98L446.40 192.83L446.60 191.52L446.80 190.03L447.00 188.37L447.20 186.50L447.40 184.43L447.60 182.12L447.80 179.53L448.00 176.61L448.20 173.30L448.40 169.50L448.60 165.04L448.80 159.66L449.00 152.92L449.20 143.94L449.40 131.38L449.57 122.64L449.60 123.09L449.80 135.63L450.00 147.10L450.20 155.36L450.40 161.72L450.60 166.89L450.80 171.25L451.00 175.02L451.20 178.35L451.40 181.33L451.60 184.02L451.80 186.47L452.00 188.72L452.20 190.78L452.40 192.69L452.60 194.46L452.80 196.09L453.00 197.61L453.20 199.01L453.40 200.31L453.60 201.50L453.80 202.60L454.00 203.60L454.20 202.93L454.40 202.16L454.60 201.30L454.80 200.34L455.00 199.29L455.20 198.13L455.40 196.88L455.60 195.51L455.80 194.03L456.00 192.43L456.20 190.69L456.40 188.80L456.60 186.74L456.80 184.49L457.00 182.03L457.20 179.30L457.40 176.26L457.60 172.84L457.80 168.91L458.00 164.30L458.20 158.74L458.40 151.72L458.60 142.29L458.80 129.21L458.94 122.61L459.00 124.16L459.20 137.33L459.40 148.00L459.60 155.68L459.80 161.57L460.00 166.32L460.20 170.29L460.40 173.68L460.60 176.62L460.80 179.20L461.00 181.47L461.20 183.48L461.40 185.26L461.60 186.83L461.80 188.21L462.00 189.42L462.20 190.45L462.40 191.32L462.60 192.04L462.80 192.60L463.00 193.00L463.20 192.07L463.40 190.98L463.60 189.72L463.80 188.29L464.00 186.69L464.20 184.88L464.40 182.85L464.60 180.59L464.80 178.03L465.00 175.15L465.20 171.86L465.40 168.05L465.60 163.55L465.80 158.09L466.00 151.15L466.20 141.79L466.40 128.79L466.54 122.23L466.60 123.85L466.80 137.30L467.00 148.27L467.20 156.27L467.40 162.50L467.60 167.62L467.80 171.97L468.00 175.76L468.20 179.13L468.40 182.15L468.60 184.90L468.80 187.41L469.00 189.73L469.20 191.86L469.40 193.85L469.60 195.69L469.80 197.40L470.00 199.00L470.20 200.48L470.40 201.86L470.60 203.13L470.80 204.31L471.00 205.39L471.20 206.38L471.40 207.28L471.60 208.08L471.80 208.79L472.00 209.40L472.20 207.61L472.40 205.72L472.60 203.73L472.80 201.62L473.00 199.39L473.20 197.03L473.40 194.51L473.60 191.84L473.80 188.97L474.00 185.89L474.20 182.55L474.40 178.89L474.60 174.83L474.80 170.26L475.00 165.00L475.20 158.73L475.40 150.91L475.60 140.50L475.80 126.61L475.91 121.87L476.00 124.90L476.20 137.86L476.40 147.49L476.60 154.30L476.80 159.41L477.00 163.42L477.20 166.66L477.40 169.33L477.60 171.54L477.80 173.39L478.00 174.95L478.20 176.25L478.40 177.33L478.60 178.23L478.80 178.95L479.00 179.52L479.20 179.94L479.40 180.24L479.60 180.40L479.80 180.44L480.00 180.34L480.20 180.11L480.40 179.74L480.60 179.23L480.80 178.55L481.00 177.70L481.20 176.66L481.40 175.39L481.60 173.87L481.80 172.05L482.00 169.88L482.20 167.26L482.40 164.08L482.60 160.15L482.80 155.16L483.00 148.55L483.20 139.27L483.40 126.41L483.51 122.15L483.60 125.50L483.80 139.35L484.00 149.96L484.20 157.82L484.40 164.06L484.60 169.25L484.80 173.71L485.00 177.65L485.20 181.17L485.40 184.38L485.60 187.31L485.80 190.03L486.00 192.55L486.20 194.90L486.40 197.10L486.60 199.17L486.80 201.12L487.00 202.95L487.20 204.68L487.40 206.30L487.60 207.83L487.80 209.26L488.00 210.60L488.20 209.59L488.40 208.49L488.60 207.30L488.80 206.02L489.00 204.64L489.20 203.16L489.40 201.58L489.60 199.89L489.80 198.08L490.00 196.14L490.20 194.07L490.40 191.85L490.60 189.45L490.80 186.86L491.00 184.04L491.20 180.94L491.40 177.51L491.60 173.67L491.80 169.28L492.00 164.15L492.20 157.96L492.40 150.08L492.60 139.38L492.80 125.63L492.88 122.91L493.00 127.82L493.20 140.59L493.40 149.71L493.60 156.23L493.80 161.17L494.00 165.08L494.20 168.25L494.40 170.87L494.60 173.06L494.80 174.89L495.00 176.44L495.20 177.73L495.40 178.81L495.60 179.69L495.80 180.40L496.00 180.94L496.20 181.34L496.40 181.60L496.60 181.72L496.80 181.69L497.00 181.52L497.20 181.21L497.40 180.75L497.60 180.13L497.80 179.35L498.00 178.38L498.20 177.21L498.40 175.81L498.60 174.15L498.80 172.19L499.00 169.87L499.20 167.10L499.40 163.75L499.60 159.62L499.80 154.38L500.00 147.42L500.20 137.58L500.40 124.62L500.48 122.16L500.60 128.28L500.80 143.42L501.00 155.10L501.20 164.31L501.40 172.04L501.60 178.83L501.80 184.96L502.00 190.61L502.20 195.89L502.40 200.87L502.60 205.62L502.80 210.16L503.00 214.52L503.20 218.74L503.40 222.82L503.60 226.79L503.80 230.64L504.00 234.39L504.20 238.04L504.40 241.60L504.60 239.69L504.80 237.68L505.00 235.59L505.20 233.40L505.40 231.13L505.60 228.77L505.80 226.33L506.00 223.79L506.20 221.16L506.40 218.43L506.60 215.60L506.80 212.65L507.00 209.59L507.20 206.39L507.40 203.05L507.60 199.54L507.80 195.84L508.00 191.92L508.20 187.73L508.40 183.21L508.60 178.28L508.80 172.79L509.00 166.55L509.20 159.19L509.40 150.05L509.60 137.91L509.80 123.76L509.85 122.42L510.00 129.74L510.20 142.68L510.40 151.97L510.60 158.91L510.80 164.41L511.00 168.96L511.20 172.83L511.40 176.19L511.60 179.15L511.80 181.77L512.00 184.11L512.20 186.21L512.40 188.09L512.60 189.77L512.80 191.27L513.00 192.59L513.20 193.75L513.40 194.75L513.60 195.60L513.80 194.80L514.00 193.85L514.20 192.75L514.40 191.48L514.60 190.05L514.80 188.44L515.00 186.64L515.20 184.64L515.40 182.41L515.60 179.92L515.80 177.12L516.00 173.97L516.20 170.36L516.40 166.18L516.60 161.20L516.80 155.07L517.00 147.12L517.20 136.11L517.40 122.99L517.45 121.86L517.60 128.81L517.80 141.18L518.00 149.88L518.20 156.21L518.40 161.09L518.60 165.03L518.80 168.30L519.00 171.06L519.20 173.43L519.40 175.48L519.60 177.28L519.80 178.85L520.00 180.22L520.20 181.43L520.40 182.48L520.60 183.40L520.80 184.19L521.00 184.86L521.20 185.42L521.40 185.87L521.60 186.22L521.80 186.48L522.00 186.63L522.20 186.69L522.40 186.65L522.60 186.52L522.80 186.28L523.00 185.94L523.20 185.50L523.40 184.95L523.60 184.28L523.80 183.48L524.00 182.54L524.20 181.46L524.40 180.21L524.60 178.77L524.80 177.11L525.00 175.21L525.20 173.00L525.40 170.43L525.60 167.39L525.80 163.74L526.00 159.26L526.20 153.53L526.40 145.83L526.60 134.81L526.80 123.29L526.82 123.12L527.00 133.04L527.20 146.00L527.40 155.46L527.60 162.76L527.80 168.74L528.00 173.82L528.20 178.27L528.40 182.23L528.60 185.80L528.80 189.06L529.00 192.05L529.20 194.81L529.40 197.35L529.60 199.70L529.80 201.88L530.00 203.89L530.20 205.75L530.40 207.45L530.60 209.00L530.80 207.41L531.00 205.66L531.20 203.77L531.40 201.72L531.60 199.51L531.80 197.13L532.00 194.57L532.20 191.80L532.40 188.81L532.60 185.57L532.80 182.03L533.00 178.12L533.20 173.75L533.40 168.79L533.60 163.01L533.80 156.02L534.00 147.09L534.20 134.90L534.40 122.34L534.42 122.09L534.60 131.10L534.80 142.90L535.00 151.12L535.20 157.13L535.40 161.79L535.60 165.54L535.80 168.63L536.00 171.23L536.20 173.45L536.40 175.35L536.60 176.99L536.80 178.41L537.00 179.64L537.20 180.70L537.40 181.62L537.60 182.41L537.80 183.07L538.00 183.63L538.20 184.08L538.40 184.45L538.60 184.72L538.80 184.90L539.00 185.00L539.20 185.02L539.40 184.95L539.60 184.79L539.80 184.55L540.00 184.21L540.20 183.78L540.40 183.24L540.60 182.60L540.80 181.83L541.00 180.93L541.20 179.88L541.40 178.66L541.60 177.25L541.80 175.63L542.00 173.74L542.20 171.54L542.40 168.96L542.60 165.89L542.80 162.18L543.00 157.57L543.20 151.64L543.40 143.55L543.60 131.95L543.79 122.26L543.80 122.35L544.00 134.56L544.20 147.16L544.40 156.44L544.60 163.74L544.80 169.81L545.00 175.05L545.20 179.69L545.40 183.87L545.60 187.68L545.80 191.20L546.00 194.46L546.20 197.50L546.40 200.33L546.60 202.99L546.80 205.48L547.00 207.80L547.20 209.98L547.40 212.00L547.60 210.53L547.80 208.91L548.00 207.13L548.20 205.21L548.40 203.13L548.60 200.88L548.80 198.46L549.00 195.85L549.20 193.03L549.40 189.97L549.60 186.65L549.80 183.02L550.00 179.01L550.20 174.51L550.40 169.40L550.60 163.41L550.80 156.12L551.00 146.74L551.20 133.90L551.39 123.19L551.40 123.24L551.60 134.23L551.80 145.45L552.00 153.29L552.20 159.09L552.40 163.64L552.60 167.32L552.80 170.40L553.00 173.00L553.20 175.23L553.40 177.17L553.60 178.85L553.80 180.31L554.00 181.59L554.20 182.70L554.40 183.66L554.60 184.49L554.80 185.19L555.00 185.77L555.20 186.24L555.40 186.61L555.60 186.87L555.80 187.04L556.00 187.10L556.20 187.08L556.40 186.95L556.60 186.73L556.80 186.41L557.00 185.98L557.20 185.45L557.40 184.81L557.60 184.05L557.80 183.16L558.00 182.13L558.20 180.95L558.40 179.60L558.60 178.05L558.80 176.29L559.00 174.26L559.20 171.92L559.40 169.19L559.60 165.96L559.80 162.07L560.00 157.24L560.20 151.01L560.40 142.46L560.60 130.27L560.76 122.63L560.80 123.34L561.00 135.93L561.20 146.87L561.40 154.65L561.60 160.56L561.80 165.28L562.00 169.19L562.20 172.50L562.40 175.36L562.60 177.84L562.80 180.02L563.00 181.93L563.20 183.61L563.40 185.08L563.60 186.36L563.80 187.47L564.00 188.40L564.20 188.51L564.40 188.45L564.60 188.24L564.80 187.88L565.00 187.35L565.20 186.67L565.40 185.82L565.60 184.79L565.80 183.58L566.00 182.17L566.20 180.53L566.40 178.65L566.60 176.49L566.80 173.99L567.00 171.08L567.20 167.67L567.40 163.57L567.60 158.54L567.80 152.09L568.00 143.33L568.20 130.93L568.36 123.14L568.40 124.04L568.60 137.78L568.80 149.97L569.00 159.08L569.20 166.35L569.40 172.49L569.60 177.84L569.80 182.64L570.00 187.02L570.20 191.05L570.40 194.82L570.60 198.36L570.80 201.70L571.00 204.88L571.20 207.90L571.40 210.80L571.60 213.57L571.80 216.23L572.00 218.78L572.20 221.24L572.40 223.60L572.60 222.34L572.80 220.98L573.00 219.54L573.20 218.00L573.40 216.37L573.60 214.65L573.80 212.84L574.00 210.94L574.20 208.93L574.40 206.82L574.60 204.60L574.80 202.26L575.00 199.78L575.20 197.16L575.40 194.38L575.60 191.42L575.80 188.24L576.00 184.80L576.20 181.06L576.40 176.93L576.60 172.30L576.80 167.01L577.00 160.75L577.20 153.01L577.40 142.82L577.60 129.04L577.73 122.83L577.80 124.96L578.00 138.57L578.20 149.39L578.40 157.30L578.60 163.48L578.80 168.56L579.00 172.87L579.20 176.62L579.40 179.93L579.60 182.89L579.80 185.55L580.00 187.96L580.20 190.14L580.40 192.13L580.60 193.92L580.80 195.54L581.00 197.00L581.20 196.63L581.40 196.11L581.60 195.43L581.80 194.60L582.00 193.62L582.20 192.47L582.40 191.16L582.60 189.68L582.80 188.01L583.00 186.15L583.20 184.06L583.40 181.73L583.60 179.11L583.80 176.15L584.00 172.79L584.20 168.89L584.40 164.30L584.60 158.72L584.80 151.64L585.00 142.07L585.20 128.87L585.33 122.98L585.40 124.99L585.60 138.15L585.80 148.48L586.00 155.88L586.20 161.55L586.40 166.11L586.60 169.91L586.80 173.15L587.00 175.96L587.20 178.42L587.40 180.61L587.60 182.55L587.80 184.29L588.00 185.85L588.20 187.26L588.40 188.51L588.60 189.64L588.80 190.64L589.00 191.53L589.20 192.30L589.40 192.98L589.60 193.55L589.80 194.02L590.00 194.40L590.20 193.97L590.40 193.45L590.60 192.83L590.80 192.11L591.00 191.29L591.20 190.36L591.40 189.32L591.60 188.15L591.80 186.86L592.00 185.43L592.20 183.85L592.40 182.09L592.60 180.14L592.80 177.95L593.00 175.50L593.20 172.72L593.40 169.52L593.60 165.79L593.80 161.34L594.00 155.85L594.20 148.76L594.40 138.96L594.60 125.74L594.70 121.99L594.80 125.95L595.00 139.68L595.20 150.02L595.40 157.68L595.60 163.73L595.80 168.75L596.00 173.05L596.20 176.81L596.40 180.15L596.60 183.15L596.80 185.86L597.00 188.32L597.20 190.57L597.40 192.62L597.60 194.48L597.80 196.17L598.00 197.70L598.20 199.07L598.40 200.29L598.60 201.35L598.80 202.25L599.00 203.00L599.20 201.19L599.40 199.22L599.60 197.07L599.80 194.74L600.00 192.21L600.20 189.46L600.40 186.46L600.60 183.18L600.80 179.55L601.00 175.50L601.20 170.92L601.40 165.61L601.60 159.27L601.80 151.34L602.00 140.73L602.20 126.75L602.30 122.68L602.40 126.31L602.60 139.27L602.80 148.77L603.00 155.56L603.20 160.72L603.40 164.83L603.60 168.20L603.80 171.03L604.00 173.44L604.20 175.51L604.40 177.31L604.60 178.87L604.80 180.23L605.00 181.41L605.20 182.44L605.40 183.33L605.60 184.08L605.80 184.72L606.00 185.25L606.20 185.67L606.40 186.00L606.60 186.23L606.80 186.36L607.00 186.40L607.20 186.35L607.40 186.20L607.60 185.97L607.80 185.63L608.00 185.19L608.20 184.65L608.40 183.99L608.60 183.22L608.80 182.31L609.00 181.26L609.20 180.05L609.40 178.65L609.60 177.06L609.80 175.22L610.00 173.09L610.20 170.62L610.40 167.71L610.60 164.23L610.80 159.99L611.00 154.62L611.20 147.51L611.40 137.46L611.60 124.56L611.67 122.63L611.80 129.05L612.00 143.22L612.20 153.82L612.40 161.97L612.60 168.66L612.80 174.39L613.00 179.44L613.20 183.99L613.40 188.15L613.60 191.98L613.80 195.54L614.00 198.87L614.20 201.99L614.40 204.93L614.60 207.69L614.80 210.28L615.00 212.72L615.20 215.00L615.40 213.46L615.60 211.78L615.80 209.94L616.00 207.94L616.20 205.79L616.40 203.48L616.60 200.99L616.80 198.33L617.00 195.46L617.20 192.37L617.40 189.03L617.60 185.40L617.80 181.42L618.00 177.01L618.20 172.05L618.40 166.33L618.60 159.52L618.80 151.01L619.00 139.62L619.20 125.47L619.27 123.18L619.40 128.98L619.60 142.02L619.80 151.43L620.00 158.35L620.20 163.77L620.40 168.21L620.60 171.97L620.80 175.21L621.00 178.06L621.20 180.59L621.40 182.86L621.60 184.90L621.80 186.74L622.00 188.42L622.20 189.94L622.40 191.33L622.60 192.58L622.80 193.72L623.00 194.74L623.20 195.65L623.40 196.46L623.60 197.17L623.80 197.77L624.00 198.28L624.20 198.69L624.40 199.00L624.60 198.09L624.80 197.08L625.00 195.97L625.20 194.74L625.40 193.40L625.60 191.93L625.80 190.34L626.00 188.60L626.20 186.69L626.40 184.61L626.60 182.33L626.80 179.80L627.00 177.00L627.20 173.84L627.40 170.25L627.60 166.08L627.80 161.12L628.00 155.00L628.20 147.01L628.40 135.89L628.60 123.14L628.64 122.41L628.80 130.27L629.00 142.79L629.20 151.68L629.40 158.28L629.60 163.47L629.80 167.74L630.00 171.34L630.20 174.43L630.40 177.13L630.60 179.51L630.80 181.60L631.00 183.45L631.20 185.08L631.40 186.52L631.60 187.76L631.80 188.83L632.00 189.72L632.20 190.44L632.40 191.00L632.60 190.56L632.80 189.96L633.00 189.18L633.20 188.23L633.40 187.10L633.60 185.77L633.80 184.25L634.00 182.51L634.20 180.52L634.40 178.27L634.60 175.71L634.80 172.77L635.00 169.38L635.20 165.39L635.40 160.60L635.60 154.63L635.80 146.80L636.00 135.83L636.20 123.21L636.24 122.49L636.40 130.52L636.60 143.19L636.80 152.21L637.00 158.91L637.20 164.20L637.40 168.55L637.60 172.23L637.80 175.41L638.00 178.18L638.20 180.63L638.40 182.80L638.60 184.74L638.80 186.46L639.00 188.00L639.20 189.37L639.40 190.59L639.60 191.69L639.80 192.67L640.00 193.56L640.20 194.37L640.40 195.11L640.60 195.80L640.80 196.44L641.00 197.06" stroke="#f9e054" stroke-width="1.45"/>
<path d="M55.50 308.24L55.70 307.63L55.90 307.16L56.10 307.05L56.30 307.20L56.50 307.26L56.70 306.97L56.90 306.40L57.10 305.87L57.30 305.68L57.50 305.80L57.70 305.93L57.90 305.75L58.10 305.23L58.30 304.66L58.50 304.39L58.70 304.47L58.90 304.64L59.10 304.57L59.30 304.13L59.50 303.55L59.70 303.20L59.90 303.22L60.10 303.42L60.30 303.44L60.50 303.10L60.70 302.54L60.90 302.12L61.10 302.07L61.30 302.27L61.50 302.38L61.70 302.15L61.90 301.63L62.10 301.16L62.30 301.03L62.50 301.21L62.70 301.39L62.90 301.25L63.10 300.78L63.30 300.27L63.50 300.04L63.70 300.17L63.90 300.38L64.10 300.35L64.30 299.95L64.50 299.42L64.70 299.10L64.90 299.16L65.10 299.40L65.30 299.46L65.50 299.15L65.70 298.63L65.90 298.24L66.10 298.23L66.30 298.46L66.50 298.61L66.70 298.41L66.90 297.92L67.10 297.48L67.30 297.39L67.50 297.60L67.70 297.82L67.90 297.74L68.10 297.31L68.30 296.85L68.50 296.67L68.70 296.85L68.90 297.13L69.10 297.16L69.30 296.82L69.50 296.36L69.70 296.11L69.90 296.24L70.10 296.56L70.30 296.69L70.50 296.46L70.70 296.00L70.90 295.69L71.10 295.73L71.30 296.04L71.50 296.25L71.70 296.11L71.90 295.68L72.10 295.30L72.30 295.25L72.50 295.52L72.70 295.79L72.90 295.75L73.10 295.37L73.30 294.95L73.50 294.82L73.70 295.03L73.90 295.35L74.10 295.40L74.30 295.10L74.50 294.66L74.70 294.44L74.90 294.59L75.10 294.92L75.30 295.07L75.50 294.86L75.70 294.43L75.90 294.13L76.10 294.21L76.30 294.53L76.50 294.77L76.70 294.66L76.90 294.26L77.10 293.91L77.30 293.90L77.50 294.21L77.70 294.51L77.90 294.51L78.10 294.17L78.30 293.79L78.50 293.70L78.70 293.96L78.90 294.32L79.10 294.42L79.30 294.16L79.50 293.77L79.70 293.60L79.90 293.81L80.10 294.19L80.30 294.40L80.50 294.24L80.70 293.86L80.90 293.63L81.10 293.75L81.30 294.14L81.50 294.43L81.70 294.37L81.90 294.03L82.10 293.74L82.30 293.78L82.50 294.14L82.70 294.50L82.90 294.54L83.10 294.25L83.30 293.92L83.50 293.87L83.70 294.18L83.90 294.58L84.10 294.73L84.30 294.51L84.50 294.16L84.70 294.03L84.90 294.27L85.10 294.68L85.30 294.92L85.50 294.79L85.70 294.44L85.90 294.23L86.10 294.39L86.30 294.80L86.50 295.11L86.70 295.08L86.90 294.75L87.10 294.48L87.30 294.54L87.50 294.91L87.70 295.28L87.90 295.34L88.10 295.07L88.30 294.75L88.50 294.73L88.70 295.07L88.90 295.51L89.10 295.69L89.30 295.51L89.50 295.20L89.70 295.11L89.90 295.39L90.10 295.85L90.30 296.13L90.50 296.04L90.70 295.73L90.90 295.54L91.10 295.72L91.30 296.15L91.50 296.48L91.70 296.44L91.90 296.12L92.10 295.83L92.30 295.86L92.50 296.20L92.70 296.52L92.90 296.52L93.10 296.17L93.30 295.76L93.50 295.63L93.70 295.84L93.90 296.13L94.10 296.16L94.30 295.81L94.50 295.33L94.70 295.05L94.90 295.13L95.10 295.39L95.30 295.46L95.50 295.16L95.70 294.64L95.90 294.25L96.10 294.22L96.30 294.44L96.50 294.57L96.70 294.34L96.90 293.83L97.10 293.36L97.30 293.20L97.50 293.34L97.70 293.45L97.90 293.23L98.10 292.65L98.30 292.01L98.50 291.65L98.70 291.62L98.90 291.67L99.10 291.45L99.30 290.87L99.50 290.13L99.70 289.62L99.90 289.46L100.10 289.48L100.30 289.33L100.50 288.80L100.70 288.05L100.90 287.45L101.10 287.22L101.30 287.24L101.50 287.18L101.70 286.78L101.90 286.10L102.10 285.49L102.30 285.21L102.50 285.25L102.70 285.30L102.90 285.03L103.10 284.43L103.30 283.79L103.50 283.43L103.70 283.42L103.90 283.51L104.10 283.34L104.30 282.81L104.50 282.13L104.70 281.67L104.90 281.57L105.10 281.65L105.30 281.55L105.50 281.07L105.70 280.36L105.90 279.78L106.10 279.55L106.30 279.57L106.50 279.48L106.70 279.03L106.90 278.29L107.10 277.58L107.30 277.20L107.50 277.13L107.70 277.05L107.90 276.66L108.10 275.93L108.30 275.15L108.50 274.66L108.70 274.52L108.90 274.47L109.10 274.18L109.30 273.52L109.50 272.74L109.70 272.18L109.90 272.00L110.10 272.00L110.30 271.83L110.50 271.29L110.70 270.53L110.90 269.91L111.10 269.65L111.30 269.64L111.50 269.55L111.70 269.10L111.90 268.36L112.10 267.68L112.30 267.33L112.50 267.29L112.70 267.25L112.90 266.91L113.10 266.22L113.30 265.49L113.50 265.05L113.70 264.96L113.90 264.97L114.10 264.72L114.30 264.11L114.50 263.36L114.70 262.84L114.90 262.68L115.10 262.71L115.30 262.56L115.50 262.04L115.70 261.30L115.90 260.71L116.10 260.47L116.30 260.50L116.50 260.43L116.70 260.02L116.90 259.32L117.10 258.67L117.30 258.35L117.50 258.36L117.70 258.36L117.90 258.06L118.10 257.42L118.30 256.73L118.50 256.34L118.70 256.30L118.90 256.36L119.10 256.16L119.30 255.61L119.50 254.92L119.70 254.45L119.90 254.36L120.10 254.44L120.30 254.36L120.50 253.90L120.70 253.23L120.90 252.70L121.10 252.53L121.30 252.63L121.50 252.63L121.70 252.28L121.90 251.65L122.10 251.07L122.30 250.82L122.50 250.89L122.70 250.97L122.90 250.73L123.10 250.15L123.30 249.54L123.50 249.21L123.70 249.23L123.90 249.35L124.10 249.21L124.30 248.71L124.50 248.08L124.70 247.67L124.90 247.62L125.10 247.76L125.30 247.72L125.50 247.31L125.70 246.68L125.90 246.19L126.10 246.06L126.30 246.19L126.50 246.22L126.70 245.91L126.90 245.30L127.10 244.74L127.30 244.52L127.50 244.62L127.70 244.71L127.90 244.49L128.10 243.93L128.30 243.32L128.50 243.00L128.70 243.04L128.90 243.17L129.10 243.04L129.30 242.55L129.50 241.92L129.70 241.51L129.90 241.48L130.10 241.62L130.30 241.58L130.50 241.18L130.70 240.55L130.90 240.06L131.10 239.94L131.30 240.07L131.50 240.11L131.70 239.80L131.90 239.20L132.10 238.65L132.30 238.44L132.50 238.54L132.70 238.64L132.90 238.42L133.10 237.87L133.30 237.28L133.50 236.97L133.70 237.02L133.90 237.16L134.10 237.04L134.30 236.56L134.50 235.94L134.70 235.55L134.90 235.52L135.10 235.68L135.30 235.65L135.50 235.26L135.70 234.64L135.90 234.17L136.10 234.06L136.30 234.20L136.50 234.26L136.70 233.96L136.90 233.37L137.10 232.84L137.30 232.63L137.50 232.75L137.70 232.86L137.90 232.66L138.10 232.13L138.30 231.55L138.50 231.26L138.70 231.32L138.90 231.47L139.10 231.37L139.30 230.91L139.50 230.31L139.70 229.92L139.90 229.92L140.10 230.09L140.30 230.08L140.50 229.70L140.70 229.11L140.90 228.65L141.10 228.56L141.30 228.72L141.50 228.79L141.70 228.51L141.90 227.95L142.10 227.43L142.30 227.25L142.50 227.38L142.70 227.51L142.90 227.33L143.10 226.82L143.30 226.26L143.50 225.98L143.70 226.06L143.90 226.24L144.10 226.16L144.30 225.71L144.50 225.13L144.70 224.77L144.90 224.78L145.10 224.96L145.30 224.97L145.50 224.61L145.70 224.03L145.90 223.59L146.10 223.51L146.30 223.69L146.50 223.78L146.70 223.51L146.90 222.95L147.10 222.45L147.30 222.28L147.50 222.42L147.70 222.56L147.90 222.39L148.10 221.88L148.30 221.33L148.50 221.06L148.70 221.15L148.90 221.33L149.10 221.25L149.30 220.81L149.50 220.23L149.70 219.87L149.90 219.88L150.10 220.07L150.30 220.08L150.50 219.72L150.70 219.14L150.90 218.70L151.10 218.62L151.30 218.80L151.50 218.88L151.70 218.61L151.90 218.05L152.10 217.54L152.30 217.36L152.50 217.50L152.70 217.64L152.90 217.47L153.10 216.96L153.30 216.41L153.50 216.14L153.70 216.23L153.90 216.41L154.10 216.34L154.30 215.90L154.50 215.32L154.70 214.97L154.90 214.98L155.10 215.17L155.30 215.19L155.50 214.83L155.70 214.25L155.90 213.82L156.10 213.74L156.30 213.92L156.50 214.00L156.70 213.73L156.90 213.18L157.10 212.67L157.30 212.49L157.50 212.63L157.70 212.77L157.90 212.59L158.10 212.07L158.30 211.51L158.50 211.23L158.70 211.30L158.90 211.46L159.10 211.37L159.30 210.91L159.50 210.31L159.70 209.93L159.90 209.92L160.10 210.08L160.30 210.07L160.50 209.68L160.70 209.07L160.90 208.60L161.10 208.50L161.30 208.64L161.50 208.70L161.70 208.40L161.90 207.81L162.10 207.27L162.30 207.06L162.50 207.17L162.70 207.27L162.90 207.06L163.10 206.51L163.30 205.91L163.50 205.60L163.70 205.64L163.90 205.77L164.10 205.64L164.30 205.15L164.50 204.52L164.70 204.11L164.90 204.06L165.10 204.19L165.30 204.14L165.50 203.71L165.70 203.07L165.90 202.56L166.10 202.41L166.30 202.51L166.50 202.52L166.70 202.17L166.90 201.54L167.10 200.94L167.30 200.68L167.50 200.73L167.70 200.78L167.90 200.51L168.10 199.90L168.30 199.24L168.50 198.86L168.70 198.83L168.90 198.89L169.10 198.69L169.30 198.12L169.50 197.41L169.70 196.91L169.90 196.78L170.10 196.81L170.30 196.67L170.50 196.14L170.70 195.40L170.90 194.78L171.10 194.52L171.30 194.51L171.50 194.40L171.70 193.92L171.90 193.16L172.10 192.43L172.30 192.04L172.50 191.95L172.70 191.86L172.90 191.46L173.10 190.71L173.30 189.91L173.50 189.38L173.70 189.21L173.90 189.11L174.10 188.76L174.30 188.03L174.50 187.15L174.70 186.48L174.90 186.16L175.10 186.02L175.30 185.68L175.50 184.95L175.70 184.00L175.90 183.16L176.10 182.67L176.30 182.42L176.50 182.06L176.70 181.33L176.90 180.30L177.10 179.29L177.30 178.60L177.50 178.20L177.70 177.78L177.90 177.00L178.10 175.85L178.30 174.59L178.50 173.57L178.70 172.82L178.90 172.10L179.10 171.04L179.30 169.52L179.50 167.76L179.70 166.00L179.90 164.27L180.10 162.44L180.30 160.19L180.50 157.38L180.70 154.21L180.90 151.07M206.50 150.43L206.70 167.25L206.90 174.96L207.10 179.03L207.30 181.62L207.50 183.59L207.70 185.28L207.90 186.37L208.10 186.86L208.30 187.13L208.50 187.57L208.70 188.34L208.90 189.18L209.10 189.71L209.30 189.80L209.50 189.71L209.70 189.84L209.90 190.38L210.10 191.09L210.30 191.59L210.50 191.65L210.70 191.45L210.90 191.40L211.10 191.74L211.30 192.37L211.50 192.88L211.70 192.99L211.90 192.77L212.10 192.61L212.30 192.82L212.50 193.38L212.70 193.95L212.90 194.17L213.10 194.02L213.30 193.83L213.50 193.97L213.70 194.52L213.90 195.18L214.10 195.57L214.30 195.56L214.50 195.39L214.70 195.47L214.90 195.96L215.10 196.66L215.30 197.16L215.50 197.24L215.70 197.08L215.90 197.07L216.10 197.47L216.30 198.16L216.50 198.75L216.70 198.94L216.90 198.81L217.10 198.73L217.30 199.03L217.50 199.68L217.70 200.33L217.90 200.63L218.10 200.55L218.30 200.42L218.50 200.62L218.70 201.21L218.90 201.90L219.10 202.31L219.30 202.31L219.50 202.15L219.70 202.24L219.90 202.74L220.10 203.45L220.30 203.96L220.50 204.05L220.70 203.89L220.90 203.88L221.10 204.29L221.30 204.98L221.50 205.57L221.70 205.76L221.90 205.62L222.10 205.54L222.30 205.84L222.50 206.48L222.70 207.13L222.90 207.42L223.10 207.34L223.30 207.20L223.50 207.38L223.70 207.96L223.90 208.64L224.10 209.03L224.30 209.02L224.50 208.84L224.70 208.92L224.90 209.40L225.10 210.09L225.30 210.58L225.50 210.64L225.70 210.46L225.90 210.43L226.10 210.82L226.30 211.48L226.50 212.04L226.70 212.21L226.90 212.05L227.10 211.94L227.30 212.21L227.50 212.83L227.70 213.46L227.90 213.73L228.10 213.62L228.30 213.45L228.50 213.61L228.70 214.17L228.90 214.83L229.10 215.20L229.30 215.16L229.50 214.97L229.70 215.02L229.90 215.49L230.10 216.16L230.30 216.63L230.50 216.68L230.70 216.48L230.90 216.44L231.10 216.81L231.30 217.46L231.50 218.01L231.70 218.16L231.90 217.99L232.10 217.87L232.30 218.13L232.50 218.74L232.70 219.34L232.90 219.60L233.10 219.48L233.30 219.30L233.50 219.45L233.70 219.99L233.90 220.64L234.10 221.00L234.30 220.95L234.50 220.74L234.70 220.78L234.90 221.24L235.10 221.89L235.30 222.35L235.50 222.39L235.70 222.18L235.90 222.12L236.10 222.48L236.30 223.12L236.50 223.66L236.70 223.79L236.90 223.61L237.10 223.48L237.30 223.72L237.50 224.32L237.70 224.92L237.90 225.16L238.10 225.03L238.30 224.84L238.50 224.97L238.70 225.50L238.90 226.14L239.10 226.49L239.30 226.42L239.50 226.21L239.70 226.23L239.90 226.68L240.10 227.32L240.30 227.76L240.50 227.79L240.70 227.56L240.90 227.49L241.10 227.83L241.30 228.45L241.50 228.97L241.70 229.08L241.90 228.88L242.10 228.73L242.30 228.95L242.50 229.53L242.70 230.10L242.90 230.33L243.10 230.17L243.30 229.96L243.50 230.08L243.70 230.59L243.90 231.20L244.10 231.53L244.30 231.45L244.50 231.22L244.70 231.24L244.90 231.67L245.10 232.30L245.30 232.73L245.50 232.75L245.70 232.53L245.90 232.45L246.10 232.80L246.30 233.42L246.50 233.94L246.70 234.07L246.90 233.87L247.10 233.72L247.30 233.96L247.50 234.54L247.70 235.12L247.90 235.35L248.10 235.21L248.30 235.01L248.50 235.13L248.70 235.65L248.90 236.27L249.10 236.61L249.30 236.53L249.50 236.31L249.70 236.33L249.90 236.76L250.10 237.40L250.30 237.84L250.50 237.86L250.70 237.63L250.90 237.56L251.10 237.90L251.30 238.53L251.50 239.05L251.70 239.18L251.90 238.98L252.10 238.84L252.30 239.08L252.50 239.67L252.70 240.26L252.90 240.50L253.10 240.37L253.30 240.18L253.50 240.32L253.70 240.85L253.90 241.49L254.10 241.84L254.30 241.79L254.50 241.58L254.70 241.62L254.90 242.08L255.10 242.74L255.30 243.20L255.50 243.24L255.70 243.04L255.90 243.00L256.10 243.37L256.30 244.02L256.50 244.58L256.70 244.74L256.90 244.58L257.10 244.47L257.30 244.74L257.50 245.37L257.70 246.00L257.90 246.28L258.10 246.18L258.30 246.04L258.50 246.22L258.70 246.80L258.90 247.49L259.10 247.89L259.30 247.89L259.50 247.73L259.70 247.83L259.90 248.34L260.10 249.06L260.30 249.58L260.50 249.68L260.70 249.54L260.90 249.56L261.10 249.99L261.30 250.71L261.50 251.33L261.70 251.55L261.90 251.45L262.10 251.40L262.30 251.74L262.50 252.43L262.70 253.12L262.90 253.46L263.10 253.42L263.30 253.33L263.50 253.56L263.70 254.20L263.90 254.93L264.10 255.39L264.30 255.43L264.50 255.32L264.70 255.46L264.90 256.01L265.10 256.76L265.30 257.32L265.50 257.46L265.70 257.35L265.90 257.40L266.10 257.85L266.30 258.60L266.50 259.24L266.70 259.49L266.90 259.42L267.10 259.41L267.30 259.77L267.50 260.49L267.70 261.21L267.90 261.58L268.10 261.58L268.30 261.52L268.50 261.79L268.70 262.45L268.90 263.22L269.10 263.71L269.30 263.79L269.50 263.71L269.70 263.88L269.90 264.47L270.10 265.26L270.30 265.85L270.50 266.02L270.70 265.95L270.90 266.03L271.10 266.53L271.30 267.31L271.50 267.98L271.70 268.26L271.90 268.21L272.10 268.22L272.30 268.61L272.50 269.34L272.70 270.08L272.90 270.46L273.10 270.47L273.30 270.42L273.50 270.69L273.70 271.36L273.90 272.13L274.10 272.62L274.30 272.69L274.50 272.62L274.70 272.79L274.90 273.38L275.10 274.17L275.30 274.77L275.50 274.95L275.70 274.88L275.90 274.97L276.10 275.47L276.30 276.25L276.50 276.94L276.70 277.22L276.90 277.18L277.10 277.20L277.30 277.59L277.50 278.34L277.70 279.08L277.90 279.47L278.10 279.48L278.30 279.44L278.50 279.72L278.70 280.39L278.90 281.17L279.10 281.66L279.30 281.73L279.50 281.65L279.70 281.81L279.90 282.39L280.10 283.16L280.30 283.73L280.50 283.88L280.70 283.78L280.90 283.83L281.10 284.29L281.30 285.03L281.50 285.66L281.70 285.89L281.90 285.79L282.10 285.74L282.30 286.07L282.50 286.76L282.70 287.44L282.90 287.77L283.10 287.73L283.30 287.63L283.50 287.85L283.70 288.47L283.90 289.19L284.10 289.62L284.30 289.64L284.50 289.50L284.70 289.61L284.90 290.13L285.10 290.84L285.30 291.35L285.50 291.44L285.70 291.28L285.90 291.26L286.10 291.65L286.30 292.32L286.50 292.88L286.70 293.03L286.90 292.85L287.10 292.72L287.30 292.96L287.50 293.54L287.70 294.11L287.90 294.32L288.10 294.14L288.30 293.92L288.50 294.02L288.70 294.52L288.90 295.12L289.10 295.43L289.30 295.32L289.50 295.06L289.70 295.02L289.90 295.39L290.10 295.95L290.30 296.28L290.50 296.18L290.70 295.80L290.90 295.55L291.10 295.69L291.30 296.11L291.50 296.42L291.70 296.33L291.90 295.91L292.10 295.55L292.30 295.56L292.50 295.92L292.70 296.27L292.90 296.28L293.10 295.90L293.30 295.47L293.50 295.36L293.70 295.64L293.90 296.03L294.10 296.13L294.30 295.82L294.50 295.35L294.70 295.13L294.90 295.33L295.10 295.72L295.30 295.92L295.50 295.69L295.70 295.23L295.90 294.91L296.10 295.01L296.30 295.39L296.50 295.67L296.70 295.55L296.90 295.11L297.10 294.73L297.30 294.72L297.50 295.07L297.70 295.42L297.90 295.42L298.10 295.04L298.30 294.61L298.50 294.50L298.70 294.79L298.90 295.18L299.10 295.28L299.30 294.97L299.50 294.51L299.70 294.29L299.90 294.49L300.10 294.89L300.30 295.09L300.50 294.87L300.70 294.41L300.90 294.10L301.10 294.20L301.30 294.59L301.50 294.87L301.70 294.76L301.90 294.33L302.10 293.94L302.30 293.94L302.50 294.29L302.70 294.64L302.90 294.64L303.10 294.27L303.30 293.84L303.50 293.73L303.70 294.03L303.90 294.42L304.10 294.54L304.30 294.24L304.50 293.80L304.70 293.60L304.90 293.82L305.10 294.24L305.30 294.46L305.50 294.27L305.70 293.84L305.90 293.56L306.10 293.69L306.30 294.12L306.50 294.44L306.70 294.36L306.90 293.97L307.10 293.64L307.30 293.68L307.50 294.08L307.70 294.48L307.90 294.53L308.10 294.21L308.30 293.84L308.50 293.79L308.70 294.13L308.90 294.59L309.10 294.76L309.30 294.52L309.50 294.13L309.70 293.99L309.90 294.27L310.10 294.75L310.30 295.03L310.50 294.89L310.70 294.51L310.90 294.28L311.10 294.47L311.30 294.94L311.50 295.31L311.70 295.28L311.90 294.94L312.10 294.64L312.30 294.72L312.50 295.16L312.70 295.60L312.90 295.68L313.10 295.39L313.30 295.05L313.50 295.03L313.70 295.40L313.90 295.88L314.10 296.07L314.30 295.86L314.50 295.49L314.70 295.38L314.90 295.68L315.10 296.19L315.30 296.50L315.50 296.40L315.70 296.05L315.90 295.86L316.10 296.09L316.30 296.60L316.50 297.01L316.70 297.03L316.90 296.73L317.10 296.48L317.30 296.62L317.50 297.10L317.70 297.59L317.90 297.73L318.10 297.50L318.30 297.21L318.50 297.25L318.70 297.69L318.90 298.23L319.10 298.49L319.30 298.34L319.50 298.03L319.70 297.98L319.90 298.34L320.10 298.91L320.30 299.27L320.50 299.22L320.70 298.93L320.90 298.79L321.10 299.06L321.30 299.62L321.50 300.08L321.70 300.13L321.90 299.87L322.10 299.66L322.30 299.84L322.50 300.37L322.70 300.90L322.90 301.09L323.10 300.90L323.30 300.67L323.50 300.76L323.70 301.25L323.90 301.84L324.10 302.16L324.30 302.07L324.50 301.83L324.70 301.83L324.90 302.26L325.10 302.89L325.30 303.32L325.50 303.34L325.70 303.11L325.90 303.04L326.10 303.38L326.30 304.01L326.50 304.54L326.70 304.67L326.90 304.48L327.10 304.35L327.30 304.60L327.50 305.20L327.70 305.80L327.90 306.05L328.10 305.92L328.30 305.74L328.50 305.88L328.70 306.42L328.90 307.07L329.10 307.43L329.30 307.38L329.50 307.17L329.70 307.21L329.90 307.67L330.10 308.33L330.30 308.79L330.50 308.84L330.70 308.65L330.90 308.62L331.10 309.00L331.30 309.67L331.50 310.24L331.70 310.41L331.90 310.27L332.10 310.18L332.30 310.47L332.50 311.12L332.70 311.77L332.90 312.07L333.10 312.00L333.30 311.87L333.50 312.06L333.70 312.66L333.90 313.36L334.10 313.77L334.30 313.78L334.50 313.63L334.70 313.73L334.90 314.24L335.10 314.95L335.30 315.47L335.50 315.56L335.70 315.41L335.90 315.41L336.10 315.83L336.30 316.52L336.50 317.11L336.70 317.30L336.90 317.17L337.10 317.09L337.30 317.38L337.50 318.02L337.70 318.66L337.90 318.95L338.10 318.85L338.30 318.70L338.50 318.86L338.70 319.42L338.90 320.08L339.10 320.45L339.30 320.40L339.50 320.20L339.70 320.23L339.90 320.68L340.10 321.32L340.30 321.77L340.50 321.79L340.70 321.58L340.90 321.52L341.10 321.87L341.30 322.50L341.50 323.03L341.70 323.17L341.90 322.98L342.10 322.84L342.30 323.07L342.50 323.66L342.70 324.24L342.90 324.47L343.10 324.31L343.30 324.10L343.50 324.21L343.70 324.70L343.90 325.30L344.10 325.60L344.30 325.49L344.50 325.22L344.70 325.18L344.90 325.56L345.10 326.13L345.30 326.48L345.50 326.42L345.70 326.09L345.90 325.91L346.10 326.14L346.30 326.64L346.50 327.05L346.70 327.05L346.90 326.73L347.10 326.47L347.30 326.58L347.50 327.03L347.70 327.49L347.90 327.59L348.10 327.31L348.30 326.97L348.50 326.95L348.70 327.31L348.90 327.78L349.10 327.96L349.30 327.71L349.50 327.31L349.70 327.14L349.90 327.38L350.10 327.82L350.30 328.04L350.50 327.85L350.70 327.40L350.90 327.11L351.10 327.21L351.30 327.61L351.50 327.89L351.70 327.77L351.90 327.33L352.10 326.93L352.30 326.91L352.50 327.24L352.70 327.57L352.90 327.54L353.10 327.13L353.30 326.67L353.50 326.53L353.70 326.78L353.90 327.14L354.10 327.21L354.30 326.86L354.50 326.37L354.70 326.12L354.90 326.28L355.10 326.65L355.30 326.81L355.50 326.56L355.70 326.06L355.90 325.72L356.10 325.79L356.30 326.15L356.50 326.41L356.70 326.27L356.90 325.81L357.10 325.40L357.30 325.38L357.50 325.71L357.70 326.04L357.90 326.03L358.10 325.64L358.30 325.19L358.50 325.07L358.70 325.35L358.90 325.72L359.10 325.82L359.30 325.50L359.50 325.03L359.70 324.80L359.90 324.99L360.10 325.38L360.30 325.57L360.50 325.34L360.70 324.86L360.90 324.54L361.10 324.64L361.30 325.01L361.50 325.29L361.70 325.16L361.90 324.72L362.10 324.33L362.30 324.31L362.50 324.65L362.70 324.99L362.90 324.98L363.10 324.59L363.30 324.15L363.50 324.03L363.70 324.31L363.90 324.70L364.10 324.80L364.30 324.49L364.50 324.03L364.70 323.82L364.90 324.02L365.10 324.42L365.30 324.63L365.50 324.42L365.70 323.97L365.90 323.67L366.10 323.79L366.30 324.19L366.50 324.49L366.70 324.39L366.90 323.98L367.10 323.61L367.30 323.63L367.50 324.01L367.70 324.38L367.90 324.41L368.10 324.06L368.30 323.66L368.50 323.58L368.70 323.90L368.90 324.33L369.10 324.48L369.30 324.21L369.50 323.80L369.70 323.63L369.90 323.88L370.10 324.34L370.30 324.59L370.50 324.43L370.70 324.03L370.90 323.78L371.10 323.94L371.30 324.39L371.50 324.74L371.70 324.70L371.90 324.33L372.10 324.02L372.30 324.08L372.50 324.50L372.70 324.93L372.90 325.00L373.10 324.69L373.30 324.33L373.50 324.30L373.70 324.66L373.90 325.13L374.10 325.32L374.30 325.09L374.50 324.71L374.70 324.58L374.90 324.87L375.10 325.35L375.30 325.64L375.50 325.51L375.70 325.14L375.90 324.92L376.10 325.11L376.30 325.59L376.50 325.97L376.70 325.95L376.90 325.61L377.10 325.32L377.30 325.40L377.50 325.85L377.70 326.29L377.90 326.38L378.10 326.09L378.30 325.75L378.50 325.74L378.70 326.14L378.90 326.64L379.10 326.86L379.30 326.67L379.50 326.34L379.70 326.25L379.90 326.59L380.10 327.13L380.30 327.47L380.50 327.40L380.70 327.09L380.90 326.93L381.10 327.19L381.30 327.74L381.50 328.19L381.70 328.24L381.90 327.98L382.10 327.77L382.30 327.94L382.50 328.46L382.70 328.99L382.90 329.17L383.10 328.97L383.30 328.72L383.50 328.79L383.70 329.27L383.90 329.85L384.10 330.14L384.30 330.03L384.50 329.76L384.70 329.75L384.90 330.14L385.10 330.75L385.30 331.15L385.50 331.13L385.70 330.87L385.90 330.76L386.10 331.07L386.30 331.66L386.50 332.15L386.70 332.24L386.90 332.01L387.10 331.83L387.30 332.03L387.50 332.58L387.70 333.13L387.90 333.32L388.10 333.14L388.30 332.91L388.50 333.01L388.70 333.51L388.90 334.11L389.10 334.44L389.30 334.36L389.50 334.12L389.70 334.14L389.90 334.58L390.10 335.22L390.30 335.66L390.50 335.69L390.70 335.48L390.90 335.42L391.10 335.77L391.30 336.42L391.50 336.96L391.70 337.10L391.90 336.93L392.10 336.80L392.30 337.06L392.50 337.67L392.70 338.28L392.90 338.54L393.10 338.42L393.30 338.25L393.50 338.40L393.70 338.95L393.90 339.60L394.10 339.96L394.30 339.91L394.50 339.71L394.70 339.75L394.90 340.21L395.10 340.87L395.30 341.32L395.50 341.36L395.70 341.15L395.90 341.09L396.10 341.43L396.30 342.06L396.50 342.59L396.70 342.71L396.90 342.51L397.10 342.35L397.30 342.57L397.50 343.14L397.70 343.71L397.90 343.92L398.10 343.75L398.30 343.52L398.50 343.62L398.70 344.12L398.90 344.73L399.10 345.05L399.30 344.96L399.50 344.71L399.70 344.72L399.90 345.14L400.10 345.76L400.30 346.18L400.50 346.18L400.70 345.93L400.90 345.83L401.10 346.15L401.30 346.74L401.50 347.23L401.70 347.32L401.90 347.09L402.10 346.90L402.30 347.08L402.50 347.62L402.70 348.14L402.90 348.31L403.10 348.10L403.30 347.83L403.50 347.87L403.70 348.31L403.90 348.84L404.10 349.08L404.30 348.90L404.50 348.55L404.70 348.45L404.90 348.75L405.10 349.25L405.30 349.54L405.50 349.42L405.70 349.05L405.90 348.83L406.10 349.02L406.30 349.50L406.50 349.87L406.70 349.84L406.90 349.49L407.10 349.19L407.30 349.27L407.50 349.69L407.70 350.12L407.90 350.18L408.10 349.87L408.30 349.50L408.50 349.45L408.70 349.80L408.90 350.24L409.10 350.40L409.30 350.14L409.50 349.72L409.70 349.55L409.90 349.78L410.10 350.22L410.30 350.44L410.50 350.25L410.70 349.80L410.90 349.50L411.10 349.60L411.30 349.99L411.50 350.27L411.70 350.14L411.90 349.69L412.10 349.29L412.30 349.26L412.50 349.59L412.70 349.90L412.90 349.87L413.10 349.45L413.30 348.98L413.50 348.83L413.70 349.07L413.90 349.41L414.10 349.47L414.30 349.12L414.50 348.61L414.70 348.34L414.90 348.49L415.10 348.85L415.30 349.00L415.50 348.74L415.70 348.23L415.90 347.87L416.10 347.93L416.30 348.27L416.50 348.51L416.70 348.36L416.90 347.88L417.10 347.47L417.30 347.43L417.50 347.74L417.70 348.06L417.90 348.03L418.10 347.63L418.30 347.17L418.50 347.04L418.70 347.29L418.90 347.66L419.10 347.73L419.30 347.40L419.50 346.91L419.70 346.66L419.90 346.83L420.10 347.20L420.30 347.37L420.50 347.13L420.70 346.63L420.90 346.29L421.10 346.36L421.30 346.72L421.50 346.97L421.70 346.83L421.90 346.36L422.10 345.95L422.30 345.91L422.50 346.23L422.70 346.55L422.90 346.52L423.10 346.11L423.30 345.65L423.50 345.51L423.70 345.77L423.90 346.13L424.10 346.21L424.30 345.88L424.50 345.40L424.70 345.16L424.90 345.34L425.10 345.73L425.30 345.91L425.50 345.68L425.70 345.21L425.90 344.89L426.10 344.99L426.30 345.37L426.50 345.65L426.70 345.54L426.90 345.11L427.10 344.73L427.30 344.73L427.50 345.08L427.70 345.44L427.90 345.45L428.10 345.09L428.30 344.67L428.50 344.58L428.70 344.89L428.90 345.31L429.10 345.44L429.30 345.17L429.50 344.74L429.70 344.56L429.90 344.81L430.10 345.25L430.30 345.50L430.50 345.33L430.70 344.91L430.90 344.66L431.10 344.81L431.30 345.25L431.50 345.59L431.70 345.54L431.90 345.16L432.10 344.84L432.30 344.90L432.50 345.31L432.70 345.73L432.90 345.79L433.10 345.48L433.30 345.12L433.50 345.08L433.70 345.43L433.90 345.90L434.10 346.08L434.30 345.85L434.50 345.47L434.70 345.33L434.90 345.61L435.10 346.10L435.30 346.38L435.50 346.25L435.70 345.88L435.90 345.65L436.10 345.85L436.30 346.32L436.50 346.70L436.70 346.68L436.90 346.33L437.10 346.04L437.30 346.13L437.50 346.57L437.70 347.02L437.90 347.11L438.10 346.82L438.30 346.48L438.50 346.47L438.70 346.85L438.90 347.34L439.10 347.54L439.30 347.33L439.50 346.97L439.70 346.85L439.90 347.15L440.10 347.65L440.30 347.96L440.50 347.85L440.70 347.51L440.90 347.32L441.10 347.55L441.30 348.07L441.50 348.50L441.70 348.52L441.90 348.24L442.10 348.00L442.30 348.16L442.50 348.66L442.70 349.18L442.90 349.34L443.10 349.13L443.30 348.87L443.50 348.93L443.70 349.40L443.90 349.97L444.10 350.26L444.30 350.14L444.50 349.87L444.70 349.85L444.90 350.25L445.10 350.85L445.30 351.25L445.50 351.24L445.70 350.98L445.90 350.88L446.10 351.19L446.30 351.79L446.50 352.28L446.70 352.38L446.90 352.16L447.10 351.99L447.30 352.20L447.50 352.76L447.70 353.32L447.90 353.53L448.10 353.36L448.30 353.14L448.50 353.24L448.70 353.74L448.90 354.34L449.10 354.65L449.30 354.55L449.50 354.30L449.70 354.29L449.90 354.70L450.10 355.30L450.30 355.71L450.50 355.71L450.70 355.46L450.90 355.37L451.10 355.69L451.30 356.30L451.50 356.81L451.70 356.92L451.90 356.71L452.10 356.56L452.30 356.79L452.50 357.37L452.70 357.96L452.90 358.19L453.10 358.05L453.30 357.85L453.50 357.98L453.70 358.51L453.90 359.14L454.10 359.49L454.30 359.42L454.50 359.21L454.70 359.24L454.90 359.68L455.10 360.33L455.30 360.78L455.50 360.81L455.70 360.59L455.90 360.52L456.10 360.87L456.30 361.50L456.50 362.03L456.70 362.16L456.90 361.96L457.10 361.82L457.30 362.05L457.50 362.64L457.70 363.22L457.90 363.45L458.10 363.29L458.30 363.09L458.50 363.20L458.70 363.71L458.90 364.32L459.10 364.64L459.30 364.55L459.50 364.30L459.70 364.29L459.90 364.70L460.10 365.30L460.30 365.71L460.50 365.70L460.70 365.45L460.90 365.35L461.10 365.67L461.30 366.27L461.50 366.77L461.70 366.87L461.90 366.65L462.10 366.48L462.30 366.68L462.50 367.24L462.70 367.79L462.90 367.99L463.10 367.81L463.30 367.57L463.50 367.65L463.70 368.13L463.90 368.70L464.10 368.98L464.30 368.84L464.50 368.55L464.70 368.50L464.90 368.85L465.10 369.40L465.30 369.74L465.50 369.65L465.70 369.31L465.90 369.12L466.10 369.33L466.30 369.82L466.50 370.21L466.70 370.20L466.90 369.87L467.10 369.59L467.30 369.68L467.50 370.13L467.70 370.57L467.90 370.66L468.10 370.37L468.30 370.02L468.50 369.98L468.70 370.34L468.90 370.80L469.10 370.97L469.30 370.72L469.50 370.31L469.70 370.14L469.90 370.38L470.10 370.82L470.30 371.04L470.50 370.85L470.70 370.40L470.90 370.10L471.10 370.20L471.30 370.59L471.50 370.86L471.70 370.74L471.90 370.29L472.10 369.89L472.30 369.86L472.50 370.18L472.70 370.49L472.90 370.45L473.10 370.03L473.30 369.56L473.50 369.40L473.70 369.64L473.90 369.98L474.10 370.03L474.30 369.67L474.50 369.16L474.70 368.89L474.90 369.03L475.10 369.38L475.30 369.52L475.50 369.25L475.70 368.73L475.90 368.36L476.10 368.41L476.30 368.74L476.50 368.97L476.70 368.80L476.90 368.32L477.10 367.88L477.30 367.83L477.50 368.13L477.70 368.43L477.90 368.39L478.10 367.96L478.30 367.49L478.50 367.34L478.70 367.60L478.90 367.96L479.10 368.04L479.30 367.71L479.50 367.23L479.70 367.01L479.90 367.20L480.10 367.60L480.30 367.80L480.50 367.58L480.70 367.12L480.90 366.81L481.10 366.91L481.30 367.30L481.50 367.58L481.70 367.47L481.90 367.04L482.10 366.65L482.30 366.65L482.50 367.00L482.70 367.35L482.90 367.34L483.10 366.96L483.30 366.53L483.50 366.42L483.70 366.71L483.90 367.10L484.10 367.21L484.30 366.91L484.50 366.45L484.70 366.24L484.90 366.45L485.10 366.86L485.30 367.07L485.50 366.86L485.70 366.41L485.90 366.12L486.10 366.23L486.30 366.64L486.50 366.93L486.70 366.84L486.90 366.42L487.10 366.06L487.30 366.07L487.50 366.44L487.70 366.81L487.90 366.83L488.10 366.47L488.30 366.06L488.50 365.98L488.70 366.29L488.90 366.71L489.10 366.84L489.30 366.57L489.50 366.14L489.70 365.96L489.90 366.21L490.10 366.65L490.30 366.90L490.50 366.73L490.70 366.31L490.90 366.06L491.10 366.21L491.30 366.65L491.50 366.99L491.70 366.94L491.90 366.56L492.10 366.24L492.30 366.30L492.50 366.71L492.70 367.13L492.90 367.19L493.10 366.87L493.30 366.51L493.50 366.47L493.70 366.82L493.90 367.28L494.10 367.46L494.30 367.23L494.50 366.84L494.70 366.70L494.90 366.98L495.10 367.46L495.30 367.74L495.50 367.61L495.70 367.23L495.90 367.00L496.10 367.19L496.30 367.66L496.50 368.03L496.70 368.00L496.90 367.65L497.10 367.35L497.30 367.43L497.50 367.86L497.70 368.30L497.90 368.38L498.10 368.08L498.30 367.74L498.50 367.72L498.70 368.10L498.90 368.59L499.10 368.80L499.30 368.60L499.50 368.25L499.70 368.15L499.90 368.47L500.10 368.99L500.30 369.32L500.50 369.23L500.70 368.90L500.90 368.73L501.10 368.97L501.30 369.50L501.50 369.92L501.70 369.96L501.90 369.67L502.10 369.44L502.30 369.58L502.50 370.09L502.70 370.59L502.90 370.75L503.10 370.52L503.30 370.25L503.50 370.30L503.70 370.75L503.90 371.31L504.10 371.58L504.30 371.44L504.50 371.15L504.70 371.11L504.90 371.48L505.10 372.06L505.30 372.44L505.50 372.40L505.70 372.12L505.90 371.99L506.10 372.27L506.30 372.84L506.50 373.30L506.70 373.37L506.90 373.12L507.10 372.92L507.30 373.09L507.50 373.62L507.70 374.15L507.90 374.33L508.10 374.13L508.30 373.88L508.50 373.96L508.70 374.44L508.90 375.02L509.10 375.32L509.30 375.22L509.50 374.96L509.70 374.96L509.90 375.37L510.10 375.99L510.30 376.41L510.50 376.41L510.70 376.17L510.90 376.09L511.10 376.42L511.30 377.04L511.50 377.56L511.70 377.68L511.90 377.48L512.10 377.34L512.30 377.57L512.50 378.16L512.70 378.75L512.90 378.99L513.10 378.85L513.30 378.66L513.50 378.79L513.70 379.32L513.90 379.96L514.10 380.31L514.30 380.25L514.50 380.04L514.70 380.07L514.90 380.52L515.10 381.17L515.30 381.62L515.50 381.65L515.70 381.43L515.90 381.37L516.10 381.72L516.30 382.35L516.50 382.88L516.70 383.01L516.90 382.82L517.10 382.67L517.30 382.91L517.50 383.49L517.70 384.08L517.90 384.31L518.10 384.16L518.30 383.96L518.50 384.08L518.70 384.60L518.90 385.23L519.10 385.58L519.30 385.51L519.50 385.29L519.70 385.32L519.90 385.77L520.10 386.42L520.30 386.87L520.50 386.90L520.70 386.69L520.90 386.63L521.10 386.98L521.30 387.62L521.50 388.15L521.70 388.28L521.90 388.10L522.10 387.96L522.30 388.20L522.50 388.79L522.70 389.37L522.90 389.61L523.10 389.46L523.30 389.26L523.50 389.38L523.70 389.89L523.90 390.50L524.10 390.83L524.30 390.74L524.50 390.49L524.70 390.49L524.90 390.90L525.10 391.50L525.30 391.90L525.50 391.88L525.70 391.61L525.90 391.48L526.10 391.77L526.30 392.33L526.50 392.80L526.70 392.87L526.90 392.61L527.10 392.41L527.30 392.59L527.50 393.11L527.70 393.64L527.90 393.81L528.10 393.60L528.30 393.34L528.50 393.40L528.70 393.85L528.90 394.40L529.10 394.67L529.30 394.52L529.50 394.21L529.70 394.14L529.90 394.49L530.10 395.04L530.30 395.37L530.50 395.29L530.70 394.96L530.90 394.77L531.10 394.99L531.30 395.49L531.50 395.88L531.70 395.86L531.90 395.52L532.10 395.22L532.30 395.30L532.50 395.73L532.70 396.16L532.90 396.24L533.10 395.94L533.30 395.58L533.50 395.55L533.70 395.91L533.90 396.38L534.10 396.56L534.30 396.32L534.50 395.93L534.70 395.79L534.90 396.06L535.10 396.53L535.30 396.80L535.50 396.65L535.70 396.25L535.90 396.00L536.10 396.16L536.30 396.61L536.50 396.95L536.70 396.88L536.90 396.50L537.10 396.16L537.30 396.20L537.50 396.59L537.70 396.98L537.90 397.01L538.10 396.66L538.30 396.25L538.50 396.17L538.70 396.48L538.90 396.90L539.10 397.03L539.30 396.75L539.50 396.31L539.70 396.12L539.90 396.34L540.10 396.77L540.30 396.99L540.50 396.80L540.70 396.36L540.90 396.07L541.10 396.19L541.30 396.60L541.50 396.90L541.70 396.81L541.90 396.39L542.10 396.03L542.30 396.04L542.50 396.41L542.70 396.78L542.90 396.79L543.10 396.42L543.30 396.01L543.50 395.91L543.70 396.21L543.90 396.62L544.10 396.73L544.30 396.44L544.50 396.00L544.70 395.80L544.90 396.02L545.10 396.44L545.30 396.65L545.50 396.45L545.70 396.01L545.90 395.72L546.10 395.84L546.30 396.25L546.50 396.55L546.70 396.46L546.90 396.04L547.10 395.68L547.30 395.70L547.50 396.07L547.70 396.44L547.90 396.46L548.10 396.10L548.30 395.69L548.50 395.60L548.70 395.91L548.90 396.32L549.10 396.45L549.30 396.17L549.50 395.74L549.70 395.55L549.90 395.78L550.10 396.22L550.30 396.45L550.50 396.27L550.70 395.84L550.90 395.57L551.10 395.71L551.30 396.13L551.50 396.45L551.70 396.38L551.90 395.98L552.10 395.64L552.30 395.68L552.50 396.07L552.70 396.46L552.90 396.50L553.10 396.16L553.30 395.76L553.50 395.70L553.70 396.02L553.90 396.46L554.10 396.60L554.30 396.34L554.50 395.93L554.70 395.75L554.90 396.00L555.10 396.45L555.30 396.70L555.50 396.53L555.70 396.11L555.90 395.85L556.10 396.00L556.30 396.43L556.50 396.77L556.70 396.70L556.90 396.31L557.10 395.97L557.30 396.02L557.50 396.41L557.70 396.80L557.90 396.84L558.10 396.51L558.30 396.12L558.50 396.05L558.70 396.38L558.90 396.81L559.10 396.95L559.30 396.69L559.50 396.27L559.70 396.09L559.90 396.33L560.10 396.78L560.30 397.02L560.50 396.84L560.70 396.41L560.90 396.14L561.10 396.28L561.30 396.71L561.50 397.02L561.70 396.95L561.90 396.54L562.10 396.19L562.30 396.22L562.50 396.60L562.70 396.98L562.90 397.01L563.10 396.66L563.30 396.25L563.50 396.17L563.70 396.49L563.90 396.91L564.10 397.04L564.30 396.77L564.50 396.34L564.70 396.15L564.90 396.38L565.10 396.82L565.30 397.05L565.50 396.86L565.70 396.43L565.90 396.16L566.10 396.29L566.30 396.71L566.50 397.03L566.70 396.95L566.90 396.54L567.10 396.19L567.30 396.22L567.50 396.60L567.70 396.98L567.90 397.01L568.10 396.66L568.30 396.25L568.50 396.17L568.70 396.49L568.90 396.91L569.10 397.04L569.30 396.77L569.50 396.34L569.70 396.15L569.90 396.38L570.10 396.82L570.30 397.05L570.50 396.86L570.70 396.43L570.90 396.16L571.10 396.29L571.30 396.71L571.50 397.03L571.70 396.95L571.90 396.54L572.10 396.19L572.30 396.22L572.50 396.60L572.70 396.98L572.90 397.01L573.10 396.66L573.30 396.25L573.50 396.17L573.70 396.49L573.90 396.91L574.10 397.04L574.30 396.76L574.50 396.31L574.70 396.10L574.90 396.31L575.10 396.70L575.30 396.89L575.50 396.66L575.70 396.18L575.90 395.84L576.10 395.91L576.30 396.27L576.50 396.51L576.70 396.36L576.90 395.87L577.10 395.44L577.30 395.39L577.50 395.68L577.70 395.97L577.90 395.91L578.10 395.47L578.30 394.97L578.50 394.80L578.70 395.03L578.90 395.35L579.10 395.40L579.30 395.02L579.50 394.49L579.70 394.19L579.90 394.30L580.10 394.61L580.30 394.71L580.50 394.39L580.70 393.82L580.90 393.39L581.10 393.37L581.30 393.64L581.50 393.79L581.70 393.54L581.90 392.97L582.10 392.44L582.30 392.29L582.50 392.49L582.70 392.68L582.90 392.52L583.10 391.98L583.30 391.38L583.50 391.11L583.70 391.23L583.90 391.45L584.10 391.38L584.30 390.90L584.50 390.27L584.70 389.88L584.90 389.91L585.10 390.14L585.30 390.16L585.50 389.77L585.70 389.14L585.90 388.66L586.10 388.59L586.30 388.80L586.50 388.90L586.70 388.60L586.90 387.97L587.10 387.38L587.30 387.17L587.50 387.31L587.70 387.44L587.90 387.22L588.10 386.61L588.30 385.95L588.50 385.61L588.70 385.66L588.90 385.81L589.10 385.68L589.30 385.13L589.50 384.43L589.70 383.98L589.90 383.94L590.10 384.10L590.30 384.06L590.50 383.60L590.70 382.90L590.90 382.35L591.10 382.22L591.30 382.37L591.50 382.42L591.70 382.08L591.90 381.41L592.10 380.81L592.30 380.58L592.50 380.71L592.70 380.85L592.90 380.63L593.10 380.05L593.30 379.41L593.50 379.11L593.70 379.20L593.90 379.41L594.10 379.34L594.30 378.86L594.50 378.22L594.70 377.84L594.90 377.87L595.10 378.10L595.30 378.14L595.50 377.75L595.70 377.13L595.90 376.66L596.10 376.60L596.30 376.83L596.50 376.95L596.70 376.68L596.90 376.09L597.10 375.55L597.30 375.40L597.50 375.59L597.70 375.79L597.90 375.64L598.10 375.11L598.30 374.54L598.50 374.28L598.70 374.42L598.90 374.67L599.10 374.64L599.30 374.20L599.50 373.60L599.70 373.26L599.90 373.33L600.10 373.61L600.30 373.68L600.50 373.34L600.70 372.76L600.90 372.34L601.10 372.32L601.30 372.60L601.50 372.77L601.70 372.55L601.90 372.01L602.10 371.53L602.30 371.42L602.50 371.66L602.70 371.91L602.90 371.80L603.10 371.31L603.30 370.77L603.50 370.55L603.70 370.74L603.90 371.02L604.10 371.02L604.30 370.61L604.50 370.05L604.70 369.74L604.90 369.84L605.10 370.15L605.30 370.25L605.50 369.94L605.70 369.39L605.90 369.00L606.10 369.01L606.30 369.31L606.50 369.52L606.70 369.32L606.90 368.81L607.10 368.35L607.30 368.28L607.50 368.56L607.70 368.84L607.90 368.77L608.10 368.33L608.30 367.84L608.50 367.67L608.70 367.91L608.90 368.25L609.10 368.32L609.30 367.97L609.50 367.48L609.70 367.23L609.90 367.41L610.10 367.79L610.30 367.97L610.50 367.74L610.70 367.26L610.90 366.93L611.10 367.02L611.30 367.39L611.50 367.66L611.70 367.53L611.90 367.08L612.10 366.68L612.30 366.66L612.50 366.99L612.70 367.33L612.90 367.31L613.10 366.92L613.30 366.47L613.50 366.35L613.70 366.62L613.90 367.00L614.10 367.09L614.30 366.78L614.50 366.31L614.70 366.09L614.90 366.28L615.10 366.68L615.30 366.88L615.50 366.66L615.70 366.20L615.90 365.89L616.10 366.00L616.30 366.39L616.50 366.68L616.70 366.57L616.90 366.14L617.10 365.77L617.30 365.77L617.50 366.13L617.70 366.49L617.90 366.50L618.10 366.13L618.30 365.72L618.50 365.62L618.70 365.92L618.90 366.33L619.10 366.46L619.30 366.18L619.50 365.74L619.70 365.55L619.90 365.78L620.10 366.22L620.30 366.45L620.50 366.27L620.70 365.85L620.90 365.58L621.10 365.72L621.30 366.16L621.50 366.49L621.70 366.42L621.90 366.04L622.10 365.71L622.30 365.75L622.50 366.16L622.70 366.56L622.90 366.62L623.10 366.29L623.30 365.92L623.50 365.87L623.70 366.21L623.90 366.67L624.10 366.83L624.30 366.59L624.50 366.20L624.70 366.05L624.90 366.32L625.10 366.79L625.30 367.06L625.50 366.92L625.70 366.53L625.90 366.29L626.10 366.47L626.30 366.93L626.50 367.29L626.70 367.25L626.90 366.89L627.10 366.58L627.30 366.65L627.50 367.07L627.70 367.50L627.90 367.57L628.10 367.26L628.30 366.90L628.50 366.86L628.70 367.22L628.90 367.68L629.10 367.86L629.30 367.62L629.50 367.24L629.70 367.09L629.90 367.36L630.10 367.84L630.30 368.11L630.50 367.97L630.70 367.59L630.90 367.37L631.10 367.56L631.30 368.03L631.50 368.41L631.70 368.39L631.90 368.05L632.10 367.76L632.30 367.85L632.50 368.30L632.70 368.74L632.90 368.84L633.10 368.55L633.30 368.22L633.50 368.20L633.70 368.59L633.90 369.07L634.10 369.27L634.30 369.06L634.50 368.69L634.70 368.57L634.90 368.86L635.10 369.35L635.30 369.64L635.50 369.51L635.70 369.13L635.90 368.90L636.10 369.07L636.30 369.54L636.50 369.89L636.70 369.84L636.90 369.47L637.10 369.14L637.30 369.19L637.50 369.58L637.70 369.97L637.90 370.01L638.10 369.66L638.30 369.25L638.50 369.16L638.70 369.46L638.90 369.86L639.10 369.97L639.30 369.66L639.50 369.20L639.70 368.98L639.90 369.17L640.10 369.56L640.30 369.75L640.50 369.51L640.70 369.03L640.90 368.69L641.10 368.77L641.30 369.13L641.50 369.38L641.70 369.23L641.90 368.76L642.10 368.34L642.30 368.29L642.50 368.60L642.70 368.90L642.90 368.85L643.10 368.42L643.30 367.94L643.50 367.78L643.70 368.01L643.90 368.35L644.10 368.40L644.30 368.03L644.50 367.49L644.70 367.19L644.90 367.30L645.10 367.60L645.30 367.68L645.50 367.34L645.70 366.75L645.90 366.30L646.10 366.26L646.30 366.49L646.50 366.61L646.70 366.33L646.90 365.72L647.10 365.16L647.30 364.97L647.50 365.13L647.70 365.29L647.90 365.09L648.10 364.51L648.30 363.87L648.50 363.55L648.70 363.63L648.90 363.81L649.10 363.71L649.30 363.19L649.50 362.52L649.70 362.10L649.90 362.09L650.10 362.29L650.30 362.29L650.50 361.87L650.70 361.22L650.90 360.71L651.10 360.63L651.30 360.83L651.50 360.93L651.70 360.65L651.90 360.04L652.10 359.50L652.30 359.33L652.50 359.51L652.70 359.69L652.90 359.52L653.10 358.96L653.30 358.36L653.50 358.07L653.70 358.19L653.90 358.40L654.10 358.33L654.30 357.85L654.50 357.22L654.70 356.83L654.90 356.86L655.10 357.09L655.30 357.11L655.50 356.73L655.70 356.10L655.90 355.62L656.10 355.55L656.30 355.78L656.50 355.89L656.70 355.62L656.90 355.02L657.10 354.48L657.30 354.32L657.50 354.51L657.70 354.70L657.90 354.55L658.10 354.02L658.30 353.44L658.50 353.18L658.70 353.32L658.90 353.57L659.10 353.54L659.30 353.10L659.50 352.52L659.70 352.18L659.90 352.26L660.10 352.54L660.30 352.63L660.50 352.30L660.70 351.72L660.90 351.30L661.10 351.29L661.30 351.57L661.50 351.74L661.70 351.52L661.90 350.97L662.10 350.48L662.30 350.37L662.50 350.62L662.70 350.86L662.90 350.75L663.10 350.27L663.30 349.73L663.50 349.52L663.70 349.71L663.90 350.00L664.10 350.01L664.30 349.61L664.50 349.06L664.70 348.76L664.90 348.87L665.10 349.19L665.30 349.31L665.50 349.02L665.70 348.48L665.90 348.10L666.10 348.13L666.30 348.45L666.50 348.67L666.70 348.49L666.90 348.00L667.10 347.56L667.30 347.50L667.50 347.79L667.70 348.09L667.90 348.04L668.10 347.62L668.30 347.14L668.50 346.99L668.70 347.23L668.90 347.57L669.10 347.63L669.30 347.28L669.50 346.78L669.70 346.52L669.90 346.68L670.10 347.04L670.30 347.20L670.50 346.94L670.70 346.44L670.90 346.09L671.10 346.15L671.30 346.50L671.50 346.75L671.70 346.60L671.90 346.13L672.10 345.71L672.30 345.68L672.50 345.99L672.70 346.31L672.90 346.28L673.10 345.87L673.30 345.41L673.50 345.27L673.70 345.53L673.90 345.90L674.10 345.98L674.30 345.65L674.50 345.17L674.70 344.94L674.90 345.13L675.10 345.53L675.30 345.72L675.50 345.50L675.70 345.03L675.90 344.73L676.10 344.83L676.30 345.22L676.50 345.52L676.70 345.41L676.90 344.99L677.10 344.63L677.30 344.64L677.50 345.01L677.70 345.38L677.90 345.41L678.10 345.06L678.30 344.66L678.50 344.58L678.70 344.90L678.90 345.33L679.10 345.47L679.30 345.20L679.50 344.78L679.70 344.61L679.90 344.86L680.10 345.31L680.30 345.56L680.50 345.40L680.70 344.99L680.90 344.73L681.10 344.89L681.30 345.33L681.50 345.67L681.70 345.62L681.90 345.24L682.10 344.92L682.30 344.98L682.50 345.39L682.70 345.80L682.90 345.86L683.10 345.54L683.30 345.17L683.50 345.12L683.70 345.47L683.90 345.93L684.10 346.10L684.30 345.86L684.50 345.46L684.70 345.32L684.90 345.59L685.10 346.06L685.30 346.33L685.50 346.18L685.70 345.79L685.90 345.55L686.10 345.73L686.30 346.18L686.50 346.54L686.70 346.50L686.90 346.13L687.10 345.82L687.30 345.89L687.50 346.31L687.70 346.72L687.90 346.79L688.10 346.48L688.30 346.11L688.50 346.08L688.70 346.44L688.90 346.91L689.10 347.10L689.30 346.88L689.50 346.51L689.70 346.38L689.90 346.68L690.10 347.18L690.30 347.48L690.50 347.37L690.70 347.01L690.90 346.80L691.10 347.01L691.30 347.51L691.50 347.90L691.70 347.90L691.90 347.57L692.10 347.30L692.30 347.40L692.50 347.86L692.70 348.32L692.90 348.43L693.10 348.16L693.30 347.83L693.50 347.83L693.70 348.22L693.90 348.72L694.10 348.93L694.30 348.73L694.50 348.37L694.70 348.26L694.90 348.56L695.10 349.06L695.30 349.36L695.50 349.24L695.70 348.87L695.90 348.66L696.10 348.85L696.30 349.32L696.50 349.69L696.70 349.66L696.90 349.30L697.10 348.99L697.30 349.06L697.50 349.47L697.70 349.88L697.90 349.94L698.10 349.61L698.30 349.22L698.50 349.16L698.70 349.48L698.90 349.91L699.10 350.04L699.30 349.76L699.50 349.32L699.70 349.11L699.90 349.32L700.10 349.72L700.30 349.92L700.50 349.69L700.70 349.22L700.90 348.89L701.10 348.97L701.30 349.33L701.50 349.58L701.70 349.43L701.90 348.95L702.10 348.52L702.30 348.47L702.50 348.77L702.70 349.06L702.90 349.00L703.10 348.56L703.30 348.06L703.50 347.88L703.70 348.10L703.90 348.42L704.10 348.45L704.30 348.07L704.50 347.54L704.70 347.25L704.90 347.37L705.10 347.70L705.30 347.83L705.50 347.53L705.70 347.00L705.90 346.61L706.10 346.64L706.30 346.94L706.50 347.13L706.70 346.92L706.90 346.38L707.10 345.88L707.30 345.76L707.50 345.98L707.70 346.19L707.90 346.05L708.10 345.52L708.30 344.93L708.50 344.66L708.70 344.79L708.90 345.01L709.10 344.94L709.30 344.46L709.50 343.82L709.70 343.42L709.90 343.44L710.10 343.65L710.30 343.66L710.50 343.25L710.70 342.60L710.90 342.09L711.10 342.00L711.30 342.19L711.50 342.27L711.70 341.96L711.90 341.32L712.10 340.74L712.30 340.54L712.50 340.69L712.70 340.84L712.90 340.63L713.10 340.06L713.30 339.43L713.50 339.12L713.70 339.22L713.90 339.42L714.10 339.33L714.30 338.83L714.50 338.18L714.70 337.76L714.90 337.75L715.10 337.94L715.30 337.93L715.50 337.50L715.70 336.82L715.90 336.29L716.10 336.17L716.30 336.33L716.50 336.39L716.70 336.05L716.90 335.40L717.10 334.79L717.30 334.57L717.50 334.70L717.70 334.83L717.90 334.61L718.10 334.02L718.30 333.39L718.50 333.08L718.70 333.17L718.90 333.37L719.10 333.29L719.30 332.81L719.50 332.19L719.70 331.82L719.90 331.87L720.10 332.13L720.30 332.20L720.50 331.84L720.70 331.25L720.90 330.80L721.10 330.77L721.30 331.03L721.50 331.18L721.70 330.94L721.90 330.37L722.10 329.86L722.30 329.73L722.50 329.95L722.70 330.18L722.90 330.05L723.10 329.54L723.30 328.99L723.50 328.76L723.70 328.93L723.90 329.20L724.10 329.19L724.30 328.77L724.50 328.20L724.70 327.88L724.90 327.97L725.10 328.27L725.30 328.37L725.50 328.06L725.70 327.50L725.90 327.10L726.10 327.11L726.30 327.41L726.50 327.61L726.70 327.41L726.90 326.90L727.10 326.44L727.30 326.36L727.50 326.63L727.70 326.91L727.90 326.84L728.10 326.39L728.30 325.90L728.50 325.73L728.70 325.96L728.90 326.30L729.10 326.35L729.30 326.00L729.50 325.50L729.70 325.25L729.90 325.41L730.10 325.79L730.30 325.96L730.50 325.71L730.70 325.22L730.90 324.89L731.10 324.96L731.30 325.32L731.50 325.58L731.70 325.44L731.90 324.97L732.10 324.57L732.30 324.54L732.50 324.86L732.70 325.18L732.90 325.15L733.10 324.75L733.30 324.29L733.50 324.16L733.70 324.42L733.90 324.79L734.10 324.87L734.30 324.55L734.50 324.07L734.70 323.84L734.90 324.02L735.10 324.41L735.30 324.60L735.50 324.38L735.70 323.90L735.90 323.59L736.10 323.68L736.30 324.07L736.50 324.35L736.70 324.23L736.90 323.80L737.10 323.42L737.30 323.42L737.50 323.77L737.70 324.12L737.90 324.13L738.10 323.76L738.30 323.33L738.50 323.24L738.70 323.54L738.90 323.94L739.10 324.07L739.30 323.78L739.50 323.34L739.70 323.15L739.90 323.38L740.10 323.82L740.30 324.05L740.50 323.87L740.70 323.45L740.90 323.18L741.10 323.32L741.30 323.76L741.50 324.09L741.70 324.02L741.90 323.64L742.10 323.30L742.30 323.35L742.50 323.76L742.70 324.16L742.90 324.21L743.10 323.89L743.30 323.51L743.50 323.46L743.70 323.81L743.90 324.26L744.10 324.43L744.30 324.19L744.50 323.79L744.70 323.64L744.90 323.91L745.10 324.38L745.30 324.66L745.50 324.51L745.70 324.12L745.90 323.88L746.10 324.06L746.30 324.52L746.50 324.88L746.70 324.84L746.90 324.48L747.10 324.17L747.30 324.24L747.50 324.67L747.70 325.09L747.90 325.16L748.10 324.85L748.30 324.50L748.50 324.46L748.70 324.82L748.90 325.28L749.10 325.46L749.30 325.22L749.50 324.83L749.70 324.69L749.90 324.96L750.10 325.44L750.30 325.71L750.50 325.58L750.70 325.20L750.90 324.97L751.10 325.16L751.30 325.64L751.50 326.02L751.70 326.00L751.90 325.66L752.10 325.37L752.30 325.47L752.50 325.91L752.70 326.36L752.90 326.46L753.10 326.18L753.30 325.85L753.50 325.84L753.70 326.23L753.90 326.72L754.10 326.93L754.30 326.72L754.50 326.36L754.70 326.25L754.90 326.55L755.10 327.05L755.30 327.35L755.50 327.23L755.70 326.86L755.90 326.64L756.10 326.83L756.30 327.31L756.50 327.68L756.70 327.64L756.90 327.29L757.10 326.98L757.30 327.05L757.50 327.46L757.70 327.88L757.90 327.93L758.10 327.61L758.30 327.22L758.50 327.16L758.70 327.48L758.90 327.91L759.10 328.04L759.30 327.75L759.50 327.30L759.70 327.07L759.90 327.26L760.10 327.63L760.30 327.79L760.50 327.53L760.70 327.01L760.90 326.64L761.10 326.66L761.30 326.97L761.50 327.16L761.70 326.95L761.90 326.41L762.10 325.92L762.30 325.80L762.50 326.02L762.70 326.25L762.90 326.11L763.10 325.59L763.30 325.02L763.50 324.77L763.70 324.91L763.90 325.15L764.10 325.11L764.30 324.65L764.50 324.05L764.70 323.68L764.90 323.74L765.10 323.99L765.30 324.05L765.50 323.69L765.70 323.09L765.90 322.64L766.10 322.61L766.30 322.86L766.50 322.99L766.70 322.73L766.90 322.13L767.10 321.58L767.30 321.41L767.50 321.58L767.70 321.75L767.90 321.56L768.10 320.99L768.30 320.37L768.50 320.06L768.70 320.15L768.90 320.34L769.10 320.24L769.30 319.73L769.50 319.06L769.70 318.64L769.90 318.63L770.10 318.83L770.30 318.82L770.50 318.40L770.70 317.73L770.90 317.22L771.10 317.12L771.30 317.31L771.50 317.39L771.70 317.08L771.90 316.45L772.10 315.88L772.30 315.69L772.50 315.84L772.70 316.00L772.90 315.81L773.10 315.23L773.30 314.61L773.50 314.30L773.70 314.40L773.90 314.60L774.10 314.51L774.30 314.01L774.50 313.35L774.70 312.95L774.90 312.95L775.10 313.16L775.30 313.17L775.50 312.76L775.70 312.11L775.90 311.61L776.10 311.52L776.30 311.72L776.50 311.81L776.70 311.50L776.90 310.87L777.10 310.30L777.30 310.10L777.50 310.26L777.70 310.41L777.90 310.21L778.10 309.64L778.30 309.01L778.50 308.70L778.70 308.79L778.90 308.99L779.10 308.89L779.30 308.39L779.50 307.74" stroke="#1f8fe8" stroke-width="1.8"/>
<path d="M180.90 151.07L181.50 135.00L182.00 126.00L182.70 111.00L183.20 130.00L183.80 141.00L184.50 141.50L185.20 120.00L185.70 113.00L186.30 108.50L186.80 120.00L187.50 114.00L188.20 126.00L188.80 128.00L189.50 115.00L190.20 122.00L191.00 113.50L191.80 120.00L192.50 125.00L193.20 118.00L194.00 133.00L194.80 134.50L195.30 138.00L196.00 115.00L196.70 128.00L197.50 113.00L198.20 112.00L198.80 125.00L199.50 131.00L200.20 132.00L200.80 116.00L201.50 118.00L202.00 110.00L202.60 127.00L203.30 116.50L204.00 129.00L204.80 117.00L205.50 129.00L206.00 121.50L206.30 135.00L206.50 150.43" stroke="#1f8fe8" stroke-width="1.6"/>
</g>
<path d="M55.5 429.5h3.5M779.5 429.5h-3.5M55.5 404.5h6M779.5 404.5h-6M55.5 379.5h3.5M779.5 379.5h-3.5M55.5 353.5h6M779.5 353.5h-6M55.5 328.5h3.5M779.5 328.5h-3.5M55.5 302.5h6M779.5 302.5h-6M55.5 277.5h3.5M779.5 277.5h-3.5M55.5 252.5h6M779.5 252.5h-6M55.5 226.5h3.5M779.5 226.5h-3.5M55.5 201.5h6M779.5 201.5h-6M55.5 175.5h3.5M779.5 175.5h-3.5M55.5 150.5h6M779.5 150.5h-6M55.5 124.5h3.5M779.5 124.5h-3.5M55.5 99.5h6M779.5 99.5h-6M55.5 74.5h3.5M779.5 74.5h-3.5M55.5 433.5v-6M55.5 73.5v6M115.5 433.5v-3.5M115.5 73.5v3.5M176.5 433.5v-6M176.5 73.5v6M236.5 433.5v-3.5M236.5 73.5v3.5M296.5 433.5v-6M296.5 73.5v6M357.5 433.5v-3.5M357.5 73.5v3.5M417.5 433.5v-6M417.5 73.5v6M477.5 433.5v-3.5M477.5 73.5v3.5M538.5 433.5v-6M538.5 73.5v6M598.5 433.5v-3.5M598.5 73.5v3.5M658.5 433.5v-6M658.5 73.5v6M719.5 433.5v-3.5M719.5 73.5v3.5M779.5 433.5v-6M779.5 73.5v6" stroke="#dedede" stroke-width="1" fill="none" shape-rendering="crispEdges"/>
<rect x="55.5" y="73.5" width="724.0" height="360.0" fill="none" stroke="#dedede" stroke-width="1" shape-rendering="crispEdges"/>
<path d="M5 39.4H35" stroke="#f9e054" stroke-width="1.8"/><path d="M159 39.4H189" stroke="#1f8fe8" stroke-width="1.8"/>
<g class="tick" text-anchor="end">
<text x="50.5" y="103.0">20</text>
<text x="50.5" y="153.8">0</text>
<text x="50.5" y="204.6">-20</text>
<text x="50.5" y="255.5">-40</text>
<text x="50.5" y="306.3">-60</text>
<text x="50.5" y="357.1">-80</text>
<text x="50.5" y="408.0">-100</text>
</g><g class="tick" text-anchor="middle">
<text x="55.2" y="446.9">-60</text>
<text x="175.9" y="446.9">-40</text>
<text x="296.5" y="446.9">-20</text>
<text x="417.2" y="446.9">0</text>
<text x="537.9" y="446.9">20</text>
<text x="658.5" y="446.9">40</text>
<text x="779.2" y="446.9">60</text>
</g>
<text class="lab" text-anchor="middle" x="417.5" y="67.6">Transmitted UHR TB Waveform</text>
<text class="lab" text-anchor="middle" x="417.5" y="465">Frequency (MHz)</text>
<text class="lab" text-anchor="middle" transform="translate(18.2 253.5) rotate(-90)">Power (dBm)</text>
</svg>
<div class="toolbar">
<div class="active"></div>
<div class="tab" style="left:36.6px;transform:scaleX(0.818)">SCOPE</div>
<div class="tab" style="left:128.4px;transform:scaleX(0.893)">ESTIMATION</div>
<div class="tab" style="left:223.6px;transform:scaleX(0.880)">MEASUREMENTS</div>
<div class="tab" style="left:344.0px;transform:scaleX(0.859)">SPECTRUM</div>
<div class="tab" style="left:436.4px;transform:scaleX(0.872)">SPECTRAL MASK</div>
<div class="tab" style="left:537.6px;transform:scaleX(0.899)">CHANNEL MEASUREMENTS</div>
<svg class="help" viewBox="0 0 43 22">
<polygon points="0,10.7 7,0 43,0 43,22 7,22" fill="#698fb5"/>
<circle cx="24.3" cy="10.2" r="6.9" fill="#ffffff" stroke="#1a80d6" stroke-width="1"/>
<text x="24.3" y="14.7" text-anchor="middle" font-family="Liberation Sans, Arial, sans-serif" font-size="12.5" fill="#111" stroke="#111" stroke-width="0.2">?</text>
</svg>
</div>
<div class="legend">
<div class="tx" style="left:37px">52-tone User 1 (DRU)</div>
<div class="tx" style="left:191px">52-tone User 1 (RRU)</div>
</div>
<div class="sep"></div>
<div class="status"><span style="left:7.5px">Processing</span><span style="left:102.5px">&Delta;T=12.8000 us&nbsp; Samples/Update=1536&nbsp; VBW=37.3019 kHz&nbsp; RBW=78.1250 kHz&nbsp; Sample Rate=120.0000 MHz&nbsp; Updates=16&nbsp; T=0.00016000</span></div>
</div>
</body>
</html>
